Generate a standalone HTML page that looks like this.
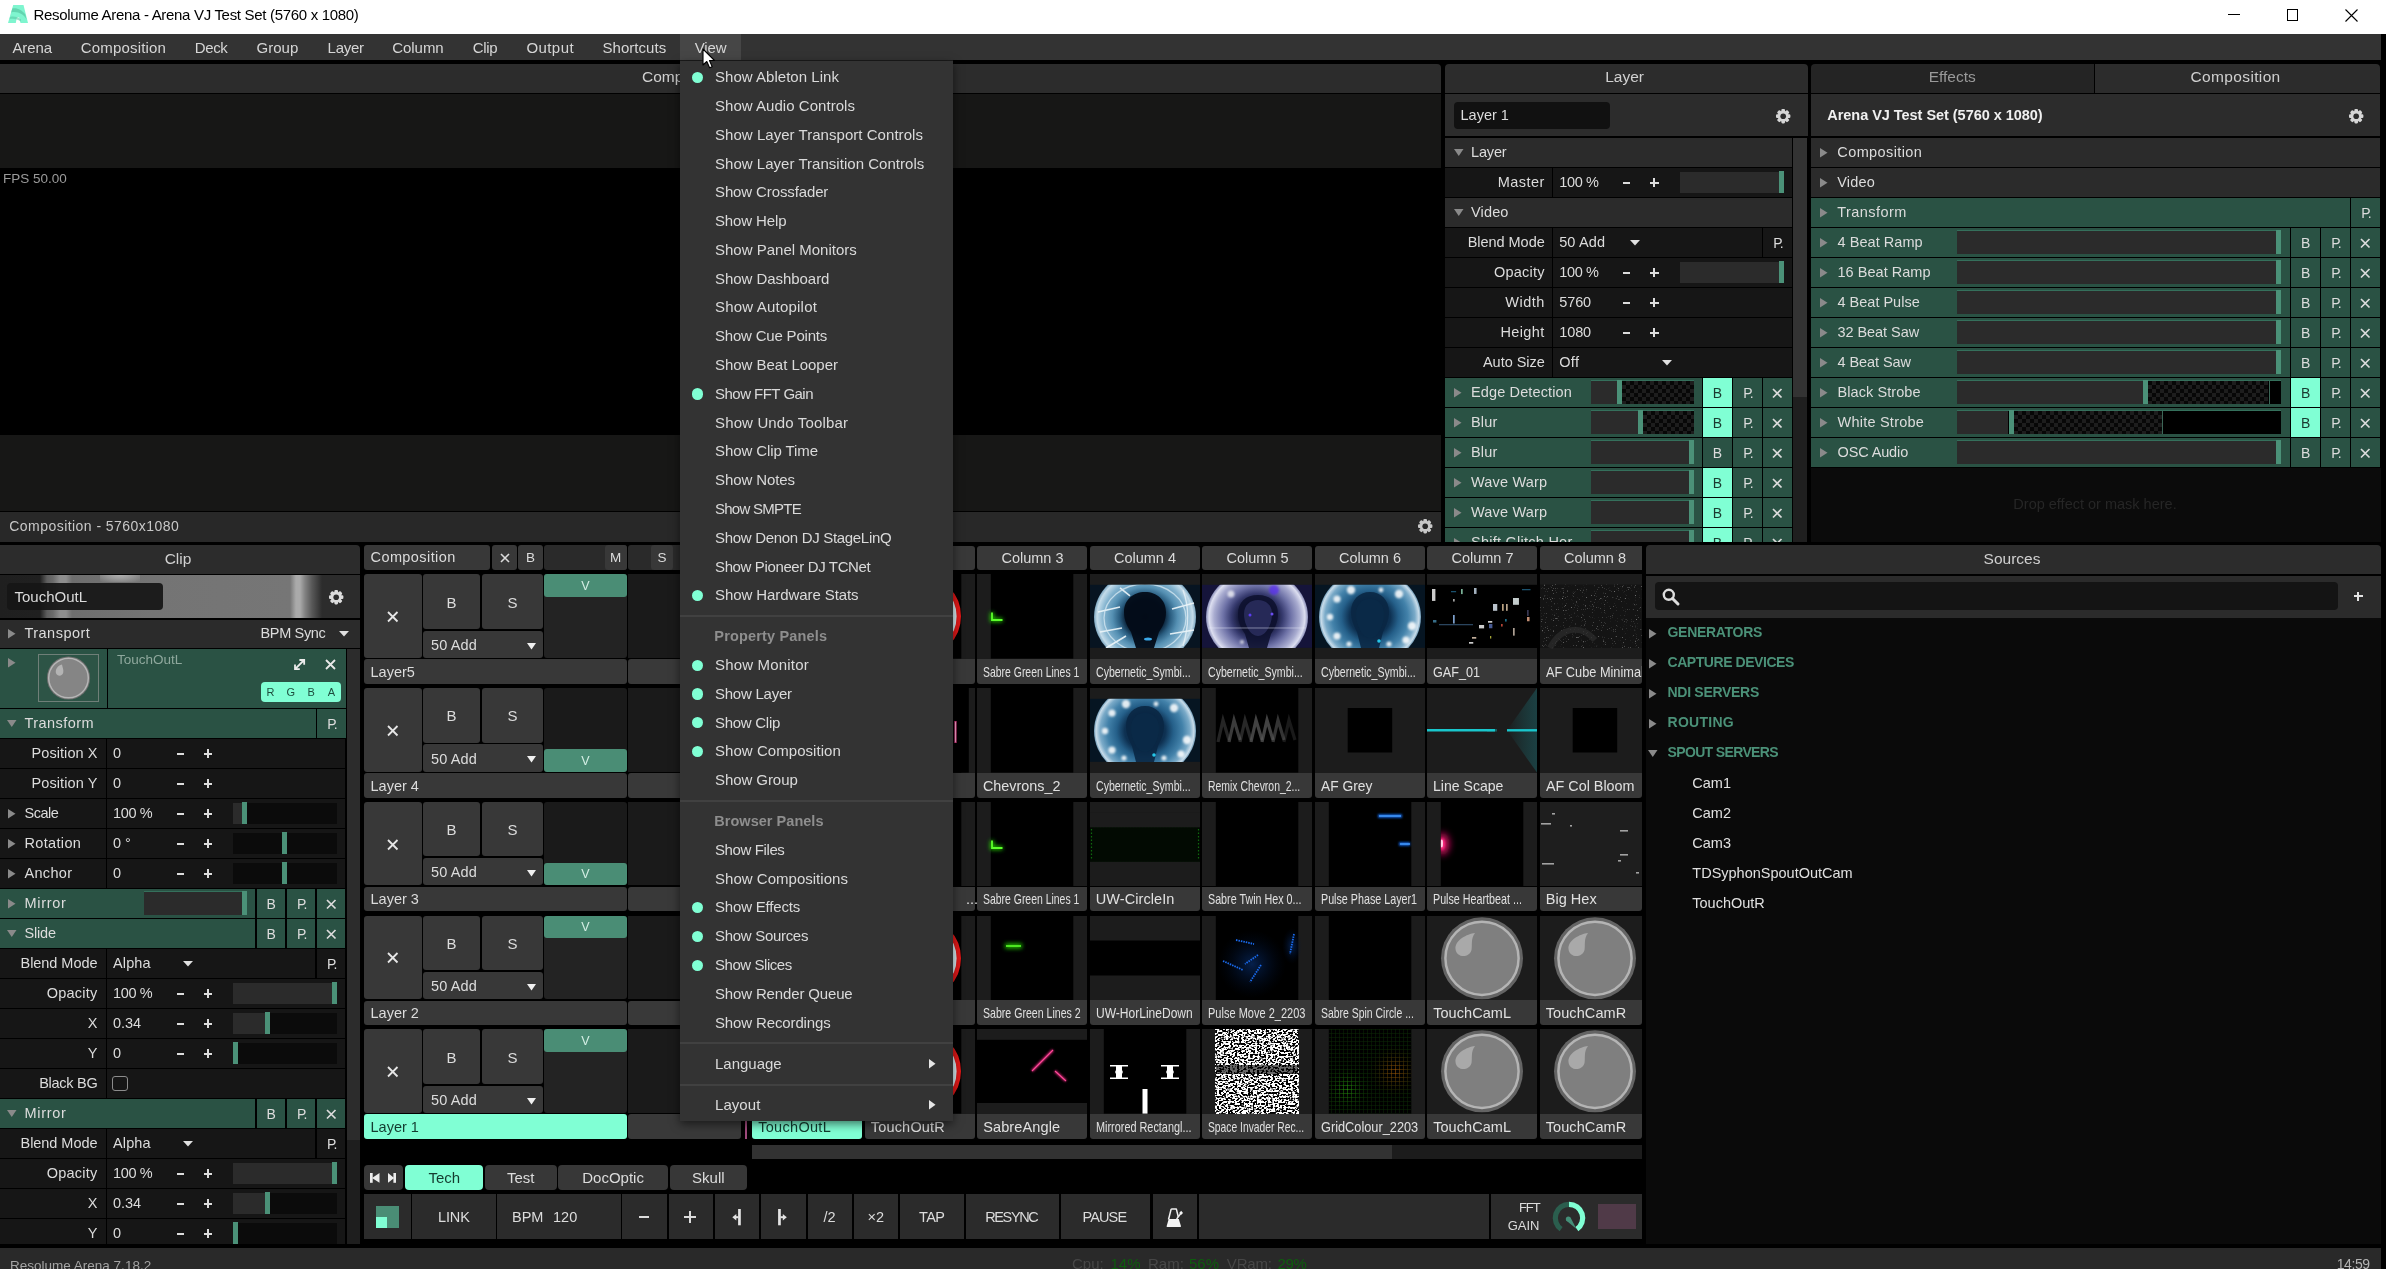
<!DOCTYPE html>
<html><head><meta charset="utf-8"><title>Resolume Arena</title>
<style>
html,body{margin:0;padding:0;background:#000;}
body{width:2386px;height:1269px;overflow:hidden;position:relative;font-family:"Liberation Sans",sans-serif;}
#root{position:absolute;left:0;top:0;width:2386px;height:1269px;overflow:hidden;background:#000;will-change:transform;}
#root div,#root svg{position:absolute;box-sizing:border-box;}
#root svg{overflow:visible;}
</style></head><body><div id="root">
<div style="left:0px;top:0px;width:2386px;height:34px;background:#ffffff;"></div>
<svg style="left:8px;top:5px;" width="20" height="19" viewBox="0 0 20 19"><path d="M5.2 0H15.5L20 18H12.5L11.2 12.5H8.8L7.8 18H0Z" fill="#7ff5cf"/><path d="M4.3 3.5C9 2.5 14 5 17.3 9.5L18.6 14.5C15.5 9 9.5 6 3.2 7.5Z" fill="#59c9a5" opacity=".75"/><path d="M2 12C6 11 10 12 13 14.5L12.6 16.5C9.5 14 5.5 13.3 1.6 14Z" fill="#59c9a5" opacity=".6"/></svg>
<div style="top:4.65px;height:19.5px;line-height:19.5px;font-size:15px;color:#000;white-space:nowrap;left:33.5px;letter-spacing:-0.31px;">Resolume Arena - Arena VJ Test Set (5760 x 1080)</div>
<div style="left:2228px;top:14px;width:12px;height:1px;background:#000;"></div>
<div style="left:2286.5px;top:9px;width:11.5px;height:11.5px;border:1px solid #000;"></div>
<svg style="left:2344.5px;top:8.5px;" width="13" height="13" viewBox="0 0 13 13"><path d="M0.5 0.5L12.5 12.5M12.5 0.5L0.5 12.5" stroke="#000" stroke-width="1.1"/></svg>
<div style="left:0px;top:34px;width:2381px;height:26px;background:#333333;"></div>
<div style="left:680px;top:34px;width:61px;height:26px;background:#464646;"></div>
<div style="top:38.25px;height:19.5px;line-height:19.5px;font-size:15px;color:#d6d6d6;white-space:nowrap;left:12.4px;letter-spacing:-0.09px;">Arena</div>
<div style="top:38.25px;height:19.5px;line-height:19.5px;font-size:15px;color:#d6d6d6;white-space:nowrap;left:80.8px;letter-spacing:0.17px;">Composition</div>
<div style="top:38.25px;height:19.5px;line-height:19.5px;font-size:15px;color:#d6d6d6;white-space:nowrap;left:194.8px;letter-spacing:-0.42px;">Deck</div>
<div style="top:38.25px;height:19.5px;line-height:19.5px;font-size:15px;color:#d6d6d6;white-space:nowrap;left:256.5px;letter-spacing:0.04px;">Group</div>
<div style="top:38.25px;height:19.5px;line-height:19.5px;font-size:15px;color:#d6d6d6;white-space:nowrap;left:327.6px;letter-spacing:-0.26px;">Layer</div>
<div style="top:38.25px;height:19.5px;line-height:19.5px;font-size:15px;color:#d6d6d6;white-space:nowrap;left:392.3px;letter-spacing:-0.06px;">Column</div>
<div style="top:38.25px;height:19.5px;line-height:19.5px;font-size:15px;color:#d6d6d6;white-space:nowrap;left:472.8px;letter-spacing:-0.36px;">Clip</div>
<div style="top:38.25px;height:19.5px;line-height:19.5px;font-size:15px;color:#d6d6d6;white-space:nowrap;left:526.4px;letter-spacing:0.43px;">Output</div>
<div style="top:38.25px;height:19.5px;line-height:19.5px;font-size:15px;color:#d6d6d6;white-space:nowrap;left:602.5px;letter-spacing:0.04px;">Shortcuts</div>
<div style="top:38.25px;height:19.5px;line-height:19.5px;font-size:15px;color:#d6d6d6;white-space:nowrap;left:694.7px;letter-spacing:-0.09px;">View</div>
<div style="left:0px;top:64px;width:1441px;height:29px;background:#2c2c2c;border-radius:0 4px 0 0;"></div>
<div style="top:67.42px;height:20.15px;line-height:20.15px;font-size:15.5px;color:#d0d0d0;white-space:nowrap;left:642px;">Composition Monitor</div>
<div style="left:0px;top:94px;width:1441px;height:74px;background:#171716;"></div>
<div style="left:0px;top:168px;width:1441px;height:267px;background:#000;"></div>
<div style="left:0px;top:435px;width:1441px;height:76px;background:#171716;"></div>
<div style="top:170.22px;height:17.55px;line-height:17.55px;font-size:13.5px;color:#9a9a9a;white-space:nowrap;left:3px;">FPS 50.00</div>
<div style="left:0px;top:512px;width:1441px;height:29.5px;background:#282828;"></div>
<div style="top:516.9px;height:18.2px;line-height:18.2px;font-size:14px;color:#c8c8c8;white-space:nowrap;left:9.3px;letter-spacing:0.45px;">Composition - 5760x1080</div>
<svg style="left:1417.3px;top:518.3px;" width="16.4" height="16.4" viewBox="0 0 16.4 16.4"><g transform="translate(8.2,8.2)"><rect x="-1.85" y="-7.2" width="3.7" height="14.4" rx="1.1" transform="rotate(0)" fill="#c8c8c8"/><rect x="-1.85" y="-7.2" width="3.7" height="14.4" rx="1.1" transform="rotate(45)" fill="#c8c8c8"/><rect x="-1.85" y="-7.2" width="3.7" height="14.4" rx="1.1" transform="rotate(90)" fill="#c8c8c8"/><rect x="-1.85" y="-7.2" width="3.7" height="14.4" rx="1.1" transform="rotate(135)" fill="#c8c8c8"/><circle r="5.4" fill="#c8c8c8"/><circle r="2.81" fill="#282828"/></g></svg>
<div style="left:0;top:0;width:2386px;height:541.5px;overflow:hidden;">
<div style="left:1444.5px;top:64.3px;width:363px;height:28.5px;background:#2c2c2c;border-radius:4px 4px 0 0;"></div>
<div style="top:67.42px;height:20.15px;line-height:20.15px;font-size:15.5px;color:#d0d0d0;white-space:nowrap;left:1424.6px;width:400px;text-align:center;">Layer</div>
<div style="left:1444.5px;top:94.4px;width:363px;height:42px;background:#2c2c2c;"></div>
<div style="left:1453.5px;top:101.5px;width:156px;height:27.5px;background:#111;border-radius:4px;"></div>
<div style="top:106.08px;height:18.85px;line-height:18.85px;font-size:14.5px;color:#dcdcdc;white-space:nowrap;left:1460.5px;">Layer 1</div>
<svg style="left:1775.1px;top:107.8px;" width="16.4" height="16.4" viewBox="0 0 16.4 16.4"><g transform="translate(8.2,8.2)"><rect x="-1.85" y="-7.2" width="3.7" height="14.4" rx="1.1" transform="rotate(0)" fill="#d6d6d6"/><rect x="-1.85" y="-7.2" width="3.7" height="14.4" rx="1.1" transform="rotate(45)" fill="#d6d6d6"/><rect x="-1.85" y="-7.2" width="3.7" height="14.4" rx="1.1" transform="rotate(90)" fill="#d6d6d6"/><rect x="-1.85" y="-7.2" width="3.7" height="14.4" rx="1.1" transform="rotate(135)" fill="#d6d6d6"/><circle r="5.4" fill="#d6d6d6"/><circle r="2.81" fill="#2c2c2c"/></g></svg>
<div style="left:1793.2px;top:138px;width:14.3px;height:404px;background:#1f1f1f;"></div>
<div style="left:1793.2px;top:138px;width:14.3px;height:259px;background:#333;"></div>
<div style="left:1444.5px;top:138px;width:347.1px;height:28.5px;background:#2b2b2b;"></div>
<svg style="left:1453.75px;top:149.25px;" width="9.5" height="7" viewBox="0 0 9.5 7"><path d="M0 0L9.5 0L4.75 7Z" fill="#8a8a8a"/></svg>
<div style="top:142.82px;height:18.85px;line-height:18.85px;font-size:14.5px;color:#dcdcdc;white-space:nowrap;left:1471px;letter-spacing:-0.15px;">Layer</div>
<div style="left:1444.5px;top:168px;width:107.2px;height:28.5px;background:#161616;"></div>
<div style="left:1553.2px;top:168px;width:238.4px;height:28.5px;background:#161616;"></div>
<div style="top:172.82px;height:18.85px;line-height:18.85px;font-size:14.5px;color:#dcdcdc;white-space:nowrap;right:841.3px;text-align:right;letter-spacing:0.43px;">Master</div>
<div style="top:172.82px;height:18.85px;line-height:18.85px;font-size:14.5px;color:#dcdcdc;white-space:nowrap;left:1559.2px;letter-spacing:-0.34px;">100 %</div>
<div style="left:1623px;top:181.85px;width:7.4px;height:1.8px;background:#dcdcdc;"></div>
<div style="left:1649.8px;top:181.85px;width:8.8px;height:1.8px;background:#dcdcdc;"></div>
<div style="left:1653.3px;top:178.35px;width:1.8px;height:8.8px;background:#dcdcdc;"></div>
<div style="left:1679.5px;top:171.5px;width:104.5px;height:21px;background:#0b0b0b;"></div>
<div style="left:1679.5px;top:171.5px;width:99.5px;height:21px;background:#2b2b2b;"></div>
<div style="left:1779px;top:171px;width:5px;height:22px;background:#4b9178;"></div>
<div style="left:1444.5px;top:198px;width:347.1px;height:28.5px;background:#2b2b2b;"></div>
<svg style="left:1453.75px;top:209.25px;" width="9.5" height="7" viewBox="0 0 9.5 7"><path d="M0 0L9.5 0L4.75 7Z" fill="#8a8a8a"/></svg>
<div style="top:202.82px;height:18.85px;line-height:18.85px;font-size:14.5px;color:#dcdcdc;white-space:nowrap;left:1471px;letter-spacing:0.15px;">Video</div>
<div style="left:1444.5px;top:228px;width:107.2px;height:28.5px;background:#161616;"></div>
<div style="left:1553.2px;top:228px;width:208.4px;height:28.5px;background:#161616;"></div>
<div style="top:232.82px;height:18.85px;line-height:18.85px;font-size:14.5px;color:#dcdcdc;white-space:nowrap;right:841.3px;text-align:right;letter-spacing:-0.04px;">Blend Mode</div>
<div style="top:232.82px;height:18.85px;line-height:18.85px;font-size:14.5px;color:#dcdcdc;white-space:nowrap;left:1559.2px;letter-spacing:0.12px;">50 Add</div>
<svg style="left:1629.5px;top:240px;" width="10" height="5.5" viewBox="0 0 10 5.5"><path d="M0 0L10 0L5 5.5Z" fill="#e0e0e0"/></svg>
<div style="left:1763.1px;top:228px;width:28.5px;height:28.5px;background:#161616;"></div>
<div style="top:233.65px;height:18.2px;line-height:18.2px;font-size:14px;color:#dcdcdc;white-space:nowrap;left:1763.6px;width:28.5px;text-align:center;letter-spacing:-1px;">P.</div>
<div style="left:1444.5px;top:258px;width:107.2px;height:28.5px;background:#161616;"></div>
<div style="left:1553.2px;top:258px;width:238.4px;height:28.5px;background:#161616;"></div>
<div style="top:262.82px;height:18.85px;line-height:18.85px;font-size:14.5px;color:#dcdcdc;white-space:nowrap;right:841.3px;text-align:right;letter-spacing:0.23px;">Opacity</div>
<div style="top:262.82px;height:18.85px;line-height:18.85px;font-size:14.5px;color:#dcdcdc;white-space:nowrap;left:1559.2px;letter-spacing:-0.34px;">100 %</div>
<div style="left:1623px;top:271.85px;width:7.4px;height:1.8px;background:#dcdcdc;"></div>
<div style="left:1649.8px;top:271.85px;width:8.8px;height:1.8px;background:#dcdcdc;"></div>
<div style="left:1653.3px;top:268.35px;width:1.8px;height:8.8px;background:#dcdcdc;"></div>
<div style="left:1679.5px;top:261.5px;width:104.5px;height:21px;background:#0b0b0b;"></div>
<div style="left:1679.5px;top:261.5px;width:99.5px;height:21px;background:#2b2b2b;"></div>
<div style="left:1779px;top:261px;width:5px;height:22px;background:#4b9178;"></div>
<div style="left:1444.5px;top:288px;width:107.2px;height:28.5px;background:#161616;"></div>
<div style="left:1553.2px;top:288px;width:238.4px;height:28.5px;background:#161616;"></div>
<div style="top:292.82px;height:18.85px;line-height:18.85px;font-size:14.5px;color:#dcdcdc;white-space:nowrap;right:841.3px;text-align:right;letter-spacing:0.47px;">Width</div>
<div style="top:292.82px;height:18.85px;line-height:18.85px;font-size:14.5px;color:#dcdcdc;white-space:nowrap;left:1559.2px;letter-spacing:-0.09px;">5760</div>
<div style="left:1623px;top:301.85px;width:7.4px;height:1.8px;background:#dcdcdc;"></div>
<div style="left:1649.8px;top:301.85px;width:8.8px;height:1.8px;background:#dcdcdc;"></div>
<div style="left:1653.3px;top:298.35px;width:1.8px;height:8.8px;background:#dcdcdc;"></div>
<div style="left:1444.5px;top:318px;width:107.2px;height:28.5px;background:#161616;"></div>
<div style="left:1553.2px;top:318px;width:238.4px;height:28.5px;background:#161616;"></div>
<div style="top:322.82px;height:18.85px;line-height:18.85px;font-size:14.5px;color:#dcdcdc;white-space:nowrap;right:841.3px;text-align:right;letter-spacing:0.4px;">Height</div>
<div style="top:322.82px;height:18.85px;line-height:18.85px;font-size:14.5px;color:#dcdcdc;white-space:nowrap;left:1559.2px;letter-spacing:-0.09px;">1080</div>
<div style="left:1623px;top:331.85px;width:7.4px;height:1.8px;background:#dcdcdc;"></div>
<div style="left:1649.8px;top:331.85px;width:8.8px;height:1.8px;background:#dcdcdc;"></div>
<div style="left:1653.3px;top:328.35px;width:1.8px;height:8.8px;background:#dcdcdc;"></div>
<div style="left:1444.5px;top:348px;width:107.2px;height:28.5px;background:#161616;"></div>
<div style="left:1553.2px;top:348px;width:238.4px;height:28.5px;background:#161616;"></div>
<div style="top:352.82px;height:18.85px;line-height:18.85px;font-size:14.5px;color:#dcdcdc;white-space:nowrap;right:841.3px;text-align:right;letter-spacing:-0.04px;">Auto Size</div>
<div style="top:352.82px;height:18.85px;line-height:18.85px;font-size:14.5px;color:#dcdcdc;white-space:nowrap;left:1559.2px;letter-spacing:0.38px;">Off</div>
<svg style="left:1661.5px;top:360px;" width="10" height="5.5" viewBox="0 0 10 5.5"><path d="M0 0L10 0L5 5.5Z" fill="#e0e0e0"/></svg>
<div style="left:1444.5px;top:378px;width:257.1px;height:28.5px;background:#2a5244;"></div>
<svg style="left:1453.75px;top:387.5px;" width="7.5" height="9.5" viewBox="0 0 7.5 9.5"><path d="M0 0L7.5 4.75L0 9.5Z" fill="#8a8a8a"/></svg>
<div style="top:382.82px;height:18.85px;line-height:18.85px;font-size:14.5px;color:#dcdcdc;white-space:nowrap;left:1471px;letter-spacing:0.13px;">Edge Detection</div>
<div style="left:1591px;top:380px;width:102.6px;height:24px;background:#35705c;"></div>
<div style="left:1591px;top:380.5px;width:102.6px;height:23px;background:#000;"></div>
<div style="left:1591px;top:380.5px;width:26px;height:23px;background:#2b2b2b;"></div>
<div style="left:1622px;top:380.5px;width:71.6px;height:23px;background-color:#070707;background-image:linear-gradient(45deg,#1d1d1d 25%,transparent 25%,transparent 75%,#1d1d1d 75%),linear-gradient(45deg,#1d1d1d 25%,transparent 25%,transparent 75%,#1d1d1d 75%);background-size:8px 8px;background-position:0 0,4px 4px;"></div>
<div style="left:1617px;top:380px;width:5px;height:24px;background:#4b9178;"></div>
<div style="left:1703.1px;top:378px;width:28.5px;height:28.5px;background:#80ffd4;"></div>
<div style="top:383.65px;height:18.2px;line-height:18.2px;font-size:14px;color:#1a3a30;white-space:nowrap;left:1703.1px;width:28.5px;text-align:center;">B</div>
<div style="left:1733.1px;top:378px;width:28.5px;height:28.5px;background:#2a5244;"></div>
<div style="top:383.65px;height:18.2px;line-height:18.2px;font-size:14px;color:#dcdcdc;white-space:nowrap;left:1733.6px;width:28.5px;text-align:center;letter-spacing:-1px;">P.</div>
<div style="left:1763.1px;top:378px;width:28.5px;height:28.5px;background:#2a5244;"></div>
<svg style="left:1772.1px;top:387.5px;" width="10.5" height="10.5" viewBox="0 0 10.5 10.5"><path d="M1 1L9.5 9.5M9.5 1L1 9.5" stroke="#dcdcdc" stroke-width="1.7" fill="none"/></svg>
<div style="left:1444.5px;top:408px;width:257.1px;height:28.5px;background:#2a5244;"></div>
<svg style="left:1453.75px;top:417.5px;" width="7.5" height="9.5" viewBox="0 0 7.5 9.5"><path d="M0 0L7.5 4.75L0 9.5Z" fill="#8a8a8a"/></svg>
<div style="top:412.82px;height:18.85px;line-height:18.85px;font-size:14.5px;color:#dcdcdc;white-space:nowrap;left:1471px;letter-spacing:0.2px;">Blur</div>
<div style="left:1591px;top:410px;width:102.6px;height:24px;background:#35705c;"></div>
<div style="left:1591px;top:410.5px;width:102.6px;height:23px;background:#000;"></div>
<div style="left:1591px;top:410.5px;width:47.3px;height:23px;background:#2b2b2b;"></div>
<div style="left:1643.3px;top:410.5px;width:50.3px;height:23px;background-color:#070707;background-image:linear-gradient(45deg,#1d1d1d 25%,transparent 25%,transparent 75%,#1d1d1d 75%),linear-gradient(45deg,#1d1d1d 25%,transparent 25%,transparent 75%,#1d1d1d 75%);background-size:8px 8px;background-position:0 0,4px 4px;"></div>
<div style="left:1638.3px;top:410px;width:5px;height:24px;background:#4b9178;"></div>
<div style="left:1703.1px;top:408px;width:28.5px;height:28.5px;background:#80ffd4;"></div>
<div style="top:413.65px;height:18.2px;line-height:18.2px;font-size:14px;color:#1a3a30;white-space:nowrap;left:1703.1px;width:28.5px;text-align:center;">B</div>
<div style="left:1733.1px;top:408px;width:28.5px;height:28.5px;background:#2a5244;"></div>
<div style="top:413.65px;height:18.2px;line-height:18.2px;font-size:14px;color:#dcdcdc;white-space:nowrap;left:1733.6px;width:28.5px;text-align:center;letter-spacing:-1px;">P.</div>
<div style="left:1763.1px;top:408px;width:28.5px;height:28.5px;background:#2a5244;"></div>
<svg style="left:1772.1px;top:417.5px;" width="10.5" height="10.5" viewBox="0 0 10.5 10.5"><path d="M1 1L9.5 9.5M9.5 1L1 9.5" stroke="#dcdcdc" stroke-width="1.7" fill="none"/></svg>
<div style="left:1444.5px;top:438px;width:257.1px;height:28.5px;background:#2a5244;"></div>
<svg style="left:1453.75px;top:447.5px;" width="7.5" height="9.5" viewBox="0 0 7.5 9.5"><path d="M0 0L7.5 4.75L0 9.5Z" fill="#8a8a8a"/></svg>
<div style="top:442.82px;height:18.85px;line-height:18.85px;font-size:14.5px;color:#dcdcdc;white-space:nowrap;left:1471px;letter-spacing:0.2px;">Blur</div>
<div style="left:1591px;top:440px;width:102.6px;height:24px;background:#35705c;"></div>
<div style="left:1591px;top:440.5px;width:102.6px;height:23px;background:#000;"></div>
<div style="left:1591px;top:440.5px;width:97.6px;height:23px;background:#2b2b2b;"></div>
<div style="left:1688.6px;top:440px;width:5px;height:24px;background:#4b9178;"></div>
<div style="left:1703.1px;top:438px;width:28.5px;height:28.5px;background:#2a5244;"></div>
<div style="top:443.65px;height:18.2px;line-height:18.2px;font-size:14px;color:#dcdcdc;white-space:nowrap;left:1703.1px;width:28.5px;text-align:center;">B</div>
<div style="left:1733.1px;top:438px;width:28.5px;height:28.5px;background:#2a5244;"></div>
<div style="top:443.65px;height:18.2px;line-height:18.2px;font-size:14px;color:#dcdcdc;white-space:nowrap;left:1733.6px;width:28.5px;text-align:center;letter-spacing:-1px;">P.</div>
<div style="left:1763.1px;top:438px;width:28.5px;height:28.5px;background:#2a5244;"></div>
<svg style="left:1772.1px;top:447.5px;" width="10.5" height="10.5" viewBox="0 0 10.5 10.5"><path d="M1 1L9.5 9.5M9.5 1L1 9.5" stroke="#dcdcdc" stroke-width="1.7" fill="none"/></svg>
<div style="left:1444.5px;top:468px;width:257.1px;height:28.5px;background:#2a5244;"></div>
<svg style="left:1453.75px;top:477.5px;" width="7.5" height="9.5" viewBox="0 0 7.5 9.5"><path d="M0 0L7.5 4.75L0 9.5Z" fill="#8a8a8a"/></svg>
<div style="top:472.82px;height:18.85px;line-height:18.85px;font-size:14.5px;color:#dcdcdc;white-space:nowrap;left:1471px;letter-spacing:0.17px;">Wave Warp</div>
<div style="left:1591px;top:470px;width:102.6px;height:24px;background:#35705c;"></div>
<div style="left:1591px;top:470.5px;width:102.6px;height:23px;background:#000;"></div>
<div style="left:1591px;top:470.5px;width:97.6px;height:23px;background:#2b2b2b;"></div>
<div style="left:1688.6px;top:470px;width:5px;height:24px;background:#4b9178;"></div>
<div style="left:1703.1px;top:468px;width:28.5px;height:28.5px;background:#80ffd4;"></div>
<div style="top:473.65px;height:18.2px;line-height:18.2px;font-size:14px;color:#1a3a30;white-space:nowrap;left:1703.1px;width:28.5px;text-align:center;">B</div>
<div style="left:1733.1px;top:468px;width:28.5px;height:28.5px;background:#2a5244;"></div>
<div style="top:473.65px;height:18.2px;line-height:18.2px;font-size:14px;color:#dcdcdc;white-space:nowrap;left:1733.6px;width:28.5px;text-align:center;letter-spacing:-1px;">P.</div>
<div style="left:1763.1px;top:468px;width:28.5px;height:28.5px;background:#2a5244;"></div>
<svg style="left:1772.1px;top:477.5px;" width="10.5" height="10.5" viewBox="0 0 10.5 10.5"><path d="M1 1L9.5 9.5M9.5 1L1 9.5" stroke="#dcdcdc" stroke-width="1.7" fill="none"/></svg>
<div style="left:1444.5px;top:498px;width:257.1px;height:28.5px;background:#2a5244;"></div>
<svg style="left:1453.75px;top:507.5px;" width="7.5" height="9.5" viewBox="0 0 7.5 9.5"><path d="M0 0L7.5 4.75L0 9.5Z" fill="#8a8a8a"/></svg>
<div style="top:502.82px;height:18.85px;line-height:18.85px;font-size:14.5px;color:#dcdcdc;white-space:nowrap;left:1471px;letter-spacing:0.17px;">Wave Warp</div>
<div style="left:1591px;top:500px;width:102.6px;height:24px;background:#35705c;"></div>
<div style="left:1591px;top:500.5px;width:102.6px;height:23px;background:#000;"></div>
<div style="left:1591px;top:500.5px;width:97.6px;height:23px;background:#2b2b2b;"></div>
<div style="left:1688.6px;top:500px;width:5px;height:24px;background:#4b9178;"></div>
<div style="left:1703.1px;top:498px;width:28.5px;height:28.5px;background:#80ffd4;"></div>
<div style="top:503.65px;height:18.2px;line-height:18.2px;font-size:14px;color:#1a3a30;white-space:nowrap;left:1703.1px;width:28.5px;text-align:center;">B</div>
<div style="left:1733.1px;top:498px;width:28.5px;height:28.5px;background:#2a5244;"></div>
<div style="top:503.65px;height:18.2px;line-height:18.2px;font-size:14px;color:#dcdcdc;white-space:nowrap;left:1733.6px;width:28.5px;text-align:center;letter-spacing:-1px;">P.</div>
<div style="left:1763.1px;top:498px;width:28.5px;height:28.5px;background:#2a5244;"></div>
<svg style="left:1772.1px;top:507.5px;" width="10.5" height="10.5" viewBox="0 0 10.5 10.5"><path d="M1 1L9.5 9.5M9.5 1L1 9.5" stroke="#dcdcdc" stroke-width="1.7" fill="none"/></svg>
<div style="left:1444.5px;top:528px;width:257.1px;height:28.5px;background:#2a5244;"></div>
<svg style="left:1453.75px;top:537.5px;" width="7.5" height="9.5" viewBox="0 0 7.5 9.5"><path d="M0 0L7.5 4.75L0 9.5Z" fill="#8a8a8a"/></svg>
<div style="top:532.83px;height:18.85px;line-height:18.85px;font-size:14.5px;color:#dcdcdc;white-space:nowrap;left:1471px;letter-spacing:0.25px;">Shift Glitch Hor</div>
<div style="left:1591px;top:530px;width:102.6px;height:24px;background:#35705c;"></div>
<div style="left:1591px;top:530.5px;width:102.6px;height:23px;background:#000;"></div>
<div style="left:1591px;top:530.5px;width:97.6px;height:23px;background:#2b2b2b;"></div>
<div style="left:1688.6px;top:530px;width:5px;height:24px;background:#4b9178;"></div>
<div style="left:1703.1px;top:528px;width:28.5px;height:28.5px;background:#80ffd4;"></div>
<div style="top:533.65px;height:18.2px;line-height:18.2px;font-size:14px;color:#1a3a30;white-space:nowrap;left:1703.1px;width:28.5px;text-align:center;">B</div>
<div style="left:1733.1px;top:528px;width:28.5px;height:28.5px;background:#2a5244;"></div>
<div style="top:533.65px;height:18.2px;line-height:18.2px;font-size:14px;color:#dcdcdc;white-space:nowrap;left:1733.6px;width:28.5px;text-align:center;letter-spacing:-1px;">P.</div>
<div style="left:1763.1px;top:528px;width:28.5px;height:28.5px;background:#2a5244;"></div>
<svg style="left:1772.1px;top:537.5px;" width="10.5" height="10.5" viewBox="0 0 10.5 10.5"><path d="M1 1L9.5 9.5M9.5 1L1 9.5" stroke="#dcdcdc" stroke-width="1.7" fill="none"/></svg>
</div>
<div style="left:1811px;top:64.3px;width:282.5px;height:28.5px;background:#242424;border-radius:4px 0 0 0;"></div>
<div style="top:67.42px;height:20.15px;line-height:20.15px;font-size:15.5px;color:#9a9a9a;white-space:nowrap;left:1752.25px;width:400px;text-align:center;">Effects</div>
<div style="left:2095px;top:64.3px;width:285px;height:28.5px;background:#2c2c2c;border-radius:0 4px 0 0;"></div>
<div style="top:67.42px;height:20.15px;line-height:20.15px;font-size:15.5px;color:#d0d0d0;white-space:nowrap;left:2035.6px;width:400px;text-align:center;letter-spacing:0.35px;">Composition</div>
<div style="left:1811px;top:94.4px;width:569px;height:42px;background:#2c2c2c;"></div>
<div style="top:105.58px;height:18.85px;line-height:18.85px;font-size:14.5px;color:#f0f0f0;white-space:nowrap;font-weight:bold;left:1827.3px;letter-spacing:-0.04px;">Arena VJ Test Set (5760 x 1080)</div>
<svg style="left:2347.6px;top:107.8px;" width="16.4" height="16.4" viewBox="0 0 16.4 16.4"><g transform="translate(8.2,8.2)"><rect x="-1.85" y="-7.2" width="3.7" height="14.4" rx="1.1" transform="rotate(0)" fill="#d6d6d6"/><rect x="-1.85" y="-7.2" width="3.7" height="14.4" rx="1.1" transform="rotate(45)" fill="#d6d6d6"/><rect x="-1.85" y="-7.2" width="3.7" height="14.4" rx="1.1" transform="rotate(90)" fill="#d6d6d6"/><rect x="-1.85" y="-7.2" width="3.7" height="14.4" rx="1.1" transform="rotate(135)" fill="#d6d6d6"/><circle r="5.4" fill="#d6d6d6"/><circle r="2.81" fill="#2c2c2c"/></g></svg>
<div style="left:1811px;top:468px;width:569.5px;height:73.5px;background:#0b0b0b;"></div>
<div style="left:1811px;top:138px;width:568.8px;height:28.5px;background:#2b2b2b;"></div>
<svg style="left:1820.45px;top:147.5px;" width="7.5" height="9.5" viewBox="0 0 7.5 9.5"><path d="M0 0L7.5 4.75L0 9.5Z" fill="#8a8a8a"/></svg>
<div style="top:142.82px;height:18.85px;line-height:18.85px;font-size:14.5px;color:#dcdcdc;white-space:nowrap;left:1837.3px;letter-spacing:0.4px;">Composition</div>
<div style="left:1811px;top:168px;width:568.8px;height:28.5px;background:#2b2b2b;"></div>
<svg style="left:1820.45px;top:177.5px;" width="7.5" height="9.5" viewBox="0 0 7.5 9.5"><path d="M0 0L7.5 4.75L0 9.5Z" fill="#8a8a8a"/></svg>
<div style="top:172.82px;height:18.85px;line-height:18.85px;font-size:14.5px;color:#dcdcdc;white-space:nowrap;left:1837.3px;letter-spacing:0.15px;">Video</div>
<div style="left:1811px;top:198px;width:538.8px;height:28.5px;background:#2a5244;"></div>
<svg style="left:1820.45px;top:207.5px;" width="7.5" height="9.5" viewBox="0 0 7.5 9.5"><path d="M0 0L7.5 4.75L0 9.5Z" fill="#8a8a8a"/></svg>
<div style="top:202.82px;height:18.85px;line-height:18.85px;font-size:14.5px;color:#dcdcdc;white-space:nowrap;left:1837.3px;letter-spacing:0.44px;">Transform</div>
<div style="left:2351.3px;top:198px;width:28.5px;height:28.5px;background:#2a5244;"></div>
<div style="top:203.65px;height:18.2px;line-height:18.2px;font-size:14px;color:#dcdcdc;white-space:nowrap;left:2351.8px;width:28.5px;text-align:center;letter-spacing:-1px;">P.</div>
<div style="left:1811px;top:228px;width:478.8px;height:28.5px;background:#2a5244;"></div>
<svg style="left:1820.25px;top:237.5px;" width="7.5" height="9.5" viewBox="0 0 7.5 9.5"><path d="M0 0L7.5 4.75L0 9.5Z" fill="#8a8a8a"/></svg>
<div style="top:232.82px;height:18.85px;line-height:18.85px;font-size:14.5px;color:#dcdcdc;white-space:nowrap;left:1837.5px;letter-spacing:0.05px;">4 Beat Ramp</div>
<div style="left:1957.3px;top:230px;width:323.7px;height:24px;background:#35705c;"></div>
<div style="left:1957.3px;top:230.5px;width:323.7px;height:23px;background:#000;"></div>
<div style="left:1957.3px;top:230.5px;width:318.7px;height:23px;background:#2b2b2b;"></div>
<div style="left:2276px;top:230px;width:5px;height:24px;background:#4b9178;"></div>
<div style="left:2291.3px;top:228px;width:28.5px;height:28.5px;background:#2a5244;"></div>
<div style="top:233.65px;height:18.2px;line-height:18.2px;font-size:14px;color:#dcdcdc;white-space:nowrap;left:2291.3px;width:28.5px;text-align:center;">B</div>
<div style="left:2321.3px;top:228px;width:28.5px;height:28.5px;background:#2a5244;"></div>
<div style="top:233.65px;height:18.2px;line-height:18.2px;font-size:14px;color:#dcdcdc;white-space:nowrap;left:2321.8px;width:28.5px;text-align:center;letter-spacing:-1px;">P.</div>
<div style="left:2351.3px;top:228px;width:28.5px;height:28.5px;background:#2a5244;"></div>
<svg style="left:2360.3px;top:237.5px;" width="10.5" height="10.5" viewBox="0 0 10.5 10.5"><path d="M1 1L9.5 9.5M9.5 1L1 9.5" stroke="#dcdcdc" stroke-width="1.7" fill="none"/></svg>
<div style="left:1811px;top:258px;width:478.8px;height:28.5px;background:#2a5244;"></div>
<svg style="left:1820.25px;top:267.5px;" width="7.5" height="9.5" viewBox="0 0 7.5 9.5"><path d="M0 0L7.5 4.75L0 9.5Z" fill="#8a8a8a"/></svg>
<div style="top:262.82px;height:18.85px;line-height:18.85px;font-size:14.5px;color:#dcdcdc;white-space:nowrap;left:1837.5px;letter-spacing:0.03px;">16 Beat Ramp</div>
<div style="left:1957.3px;top:260px;width:323.7px;height:24px;background:#35705c;"></div>
<div style="left:1957.3px;top:260.5px;width:323.7px;height:23px;background:#000;"></div>
<div style="left:1957.3px;top:260.5px;width:318.7px;height:23px;background:#2b2b2b;"></div>
<div style="left:2276px;top:260px;width:5px;height:24px;background:#4b9178;"></div>
<div style="left:2291.3px;top:258px;width:28.5px;height:28.5px;background:#2a5244;"></div>
<div style="top:263.65px;height:18.2px;line-height:18.2px;font-size:14px;color:#dcdcdc;white-space:nowrap;left:2291.3px;width:28.5px;text-align:center;">B</div>
<div style="left:2321.3px;top:258px;width:28.5px;height:28.5px;background:#2a5244;"></div>
<div style="top:263.65px;height:18.2px;line-height:18.2px;font-size:14px;color:#dcdcdc;white-space:nowrap;left:2321.8px;width:28.5px;text-align:center;letter-spacing:-1px;">P.</div>
<div style="left:2351.3px;top:258px;width:28.5px;height:28.5px;background:#2a5244;"></div>
<svg style="left:2360.3px;top:267.5px;" width="10.5" height="10.5" viewBox="0 0 10.5 10.5"><path d="M1 1L9.5 9.5M9.5 1L1 9.5" stroke="#dcdcdc" stroke-width="1.7" fill="none"/></svg>
<div style="left:1811px;top:288px;width:478.8px;height:28.5px;background:#2a5244;"></div>
<svg style="left:1820.25px;top:297.5px;" width="7.5" height="9.5" viewBox="0 0 7.5 9.5"><path d="M0 0L7.5 4.75L0 9.5Z" fill="#8a8a8a"/></svg>
<div style="top:292.82px;height:18.85px;line-height:18.85px;font-size:14.5px;color:#dcdcdc;white-space:nowrap;left:1837.5px;letter-spacing:-0px;">4 Beat Pulse</div>
<div style="left:1957.3px;top:290px;width:323.7px;height:24px;background:#35705c;"></div>
<div style="left:1957.3px;top:290.5px;width:323.7px;height:23px;background:#000;"></div>
<div style="left:1957.3px;top:290.5px;width:318.7px;height:23px;background:#2b2b2b;"></div>
<div style="left:2276px;top:290px;width:5px;height:24px;background:#4b9178;"></div>
<div style="left:2291.3px;top:288px;width:28.5px;height:28.5px;background:#2a5244;"></div>
<div style="top:293.65px;height:18.2px;line-height:18.2px;font-size:14px;color:#dcdcdc;white-space:nowrap;left:2291.3px;width:28.5px;text-align:center;">B</div>
<div style="left:2321.3px;top:288px;width:28.5px;height:28.5px;background:#2a5244;"></div>
<div style="top:293.65px;height:18.2px;line-height:18.2px;font-size:14px;color:#dcdcdc;white-space:nowrap;left:2321.8px;width:28.5px;text-align:center;letter-spacing:-1px;">P.</div>
<div style="left:2351.3px;top:288px;width:28.5px;height:28.5px;background:#2a5244;"></div>
<svg style="left:2360.3px;top:297.5px;" width="10.5" height="10.5" viewBox="0 0 10.5 10.5"><path d="M1 1L9.5 9.5M9.5 1L1 9.5" stroke="#dcdcdc" stroke-width="1.7" fill="none"/></svg>
<div style="left:1811px;top:318px;width:478.8px;height:28.5px;background:#2a5244;"></div>
<svg style="left:1820.25px;top:327.5px;" width="7.5" height="9.5" viewBox="0 0 7.5 9.5"><path d="M0 0L7.5 4.75L0 9.5Z" fill="#8a8a8a"/></svg>
<div style="top:322.82px;height:18.85px;line-height:18.85px;font-size:14.5px;color:#dcdcdc;white-space:nowrap;left:1837.5px;letter-spacing:-0.06px;">32 Beat Saw</div>
<div style="left:1957.3px;top:320px;width:323.7px;height:24px;background:#35705c;"></div>
<div style="left:1957.3px;top:320.5px;width:323.7px;height:23px;background:#000;"></div>
<div style="left:1957.3px;top:320.5px;width:318.7px;height:23px;background:#2b2b2b;"></div>
<div style="left:2276px;top:320px;width:5px;height:24px;background:#4b9178;"></div>
<div style="left:2291.3px;top:318px;width:28.5px;height:28.5px;background:#2a5244;"></div>
<div style="top:323.65px;height:18.2px;line-height:18.2px;font-size:14px;color:#dcdcdc;white-space:nowrap;left:2291.3px;width:28.5px;text-align:center;">B</div>
<div style="left:2321.3px;top:318px;width:28.5px;height:28.5px;background:#2a5244;"></div>
<div style="top:323.65px;height:18.2px;line-height:18.2px;font-size:14px;color:#dcdcdc;white-space:nowrap;left:2321.8px;width:28.5px;text-align:center;letter-spacing:-1px;">P.</div>
<div style="left:2351.3px;top:318px;width:28.5px;height:28.5px;background:#2a5244;"></div>
<svg style="left:2360.3px;top:327.5px;" width="10.5" height="10.5" viewBox="0 0 10.5 10.5"><path d="M1 1L9.5 9.5M9.5 1L1 9.5" stroke="#dcdcdc" stroke-width="1.7" fill="none"/></svg>
<div style="left:1811px;top:348px;width:478.8px;height:28.5px;background:#2a5244;"></div>
<svg style="left:1820.25px;top:357.5px;" width="7.5" height="9.5" viewBox="0 0 7.5 9.5"><path d="M0 0L7.5 4.75L0 9.5Z" fill="#8a8a8a"/></svg>
<div style="top:352.82px;height:18.85px;line-height:18.85px;font-size:14.5px;color:#dcdcdc;white-space:nowrap;left:1837.5px;letter-spacing:-0.07px;">4 Beat Saw</div>
<div style="left:1957.3px;top:350px;width:323.7px;height:24px;background:#35705c;"></div>
<div style="left:1957.3px;top:350.5px;width:323.7px;height:23px;background:#000;"></div>
<div style="left:1957.3px;top:350.5px;width:318.7px;height:23px;background:#2b2b2b;"></div>
<div style="left:2276px;top:350px;width:5px;height:24px;background:#4b9178;"></div>
<div style="left:2291.3px;top:348px;width:28.5px;height:28.5px;background:#2a5244;"></div>
<div style="top:353.65px;height:18.2px;line-height:18.2px;font-size:14px;color:#dcdcdc;white-space:nowrap;left:2291.3px;width:28.5px;text-align:center;">B</div>
<div style="left:2321.3px;top:348px;width:28.5px;height:28.5px;background:#2a5244;"></div>
<div style="top:353.65px;height:18.2px;line-height:18.2px;font-size:14px;color:#dcdcdc;white-space:nowrap;left:2321.8px;width:28.5px;text-align:center;letter-spacing:-1px;">P.</div>
<div style="left:2351.3px;top:348px;width:28.5px;height:28.5px;background:#2a5244;"></div>
<svg style="left:2360.3px;top:357.5px;" width="10.5" height="10.5" viewBox="0 0 10.5 10.5"><path d="M1 1L9.5 9.5M9.5 1L1 9.5" stroke="#dcdcdc" stroke-width="1.7" fill="none"/></svg>
<div style="left:1811px;top:378px;width:478.8px;height:28.5px;background:#2a5244;"></div>
<svg style="left:1820.25px;top:387.5px;" width="7.5" height="9.5" viewBox="0 0 7.5 9.5"><path d="M0 0L7.5 4.75L0 9.5Z" fill="#8a8a8a"/></svg>
<div style="top:382.82px;height:18.85px;line-height:18.85px;font-size:14.5px;color:#dcdcdc;white-space:nowrap;left:1837.5px;letter-spacing:0.07px;">Black Strobe</div>
<div style="left:1957.3px;top:380px;width:323.7px;height:24px;background:#35705c;"></div>
<div style="left:1957.3px;top:380.5px;width:323.7px;height:23px;background:#000;"></div>
<div style="left:1957.3px;top:380.5px;width:185.3px;height:23px;background:#2b2b2b;"></div>
<div style="left:2147.6px;top:380.5px;width:120.9px;height:23px;background-color:#070707;background-image:linear-gradient(45deg,#1d1d1d 25%,transparent 25%,transparent 75%,#1d1d1d 75%),linear-gradient(45deg,#1d1d1d 25%,transparent 25%,transparent 75%,#1d1d1d 75%);background-size:8px 8px;background-position:0 0,4px 4px;"></div>
<div style="left:2142.6px;top:380px;width:5px;height:24px;background:#4b9178;"></div>
<div style="left:2268.5px;top:380.5px;width:1.5px;height:23px;background:#3c6657;"></div>
<div style="left:2291.3px;top:378px;width:28.5px;height:28.5px;background:#80ffd4;"></div>
<div style="top:383.65px;height:18.2px;line-height:18.2px;font-size:14px;color:#1a3a30;white-space:nowrap;left:2291.3px;width:28.5px;text-align:center;">B</div>
<div style="left:2321.3px;top:378px;width:28.5px;height:28.5px;background:#2a5244;"></div>
<div style="top:383.65px;height:18.2px;line-height:18.2px;font-size:14px;color:#dcdcdc;white-space:nowrap;left:2321.8px;width:28.5px;text-align:center;letter-spacing:-1px;">P.</div>
<div style="left:2351.3px;top:378px;width:28.5px;height:28.5px;background:#2a5244;"></div>
<svg style="left:2360.3px;top:387.5px;" width="10.5" height="10.5" viewBox="0 0 10.5 10.5"><path d="M1 1L9.5 9.5M9.5 1L1 9.5" stroke="#dcdcdc" stroke-width="1.7" fill="none"/></svg>
<div style="left:1811px;top:408px;width:478.8px;height:28.5px;background:#2a5244;"></div>
<svg style="left:1820.25px;top:417.5px;" width="7.5" height="9.5" viewBox="0 0 7.5 9.5"><path d="M0 0L7.5 4.75L0 9.5Z" fill="#8a8a8a"/></svg>
<div style="top:412.82px;height:18.85px;line-height:18.85px;font-size:14.5px;color:#dcdcdc;white-space:nowrap;left:1837.5px;letter-spacing:0.23px;">White Strobe</div>
<div style="left:1957.3px;top:410px;width:323.7px;height:24px;background:#35705c;"></div>
<div style="left:1957.3px;top:410.5px;width:323.7px;height:23px;background:#000;"></div>
<div style="left:1957.3px;top:410.5px;width:51.2px;height:23px;background:#2b2b2b;"></div>
<div style="left:2013.5px;top:410.5px;width:148px;height:23px;background-color:#070707;background-image:linear-gradient(45deg,#1d1d1d 25%,transparent 25%,transparent 75%,#1d1d1d 75%),linear-gradient(45deg,#1d1d1d 25%,transparent 25%,transparent 75%,#1d1d1d 75%);background-size:8px 8px;background-position:0 0,4px 4px;"></div>
<div style="left:2008.5px;top:410px;width:5px;height:24px;background:#4b9178;"></div>
<div style="left:2161.5px;top:410.5px;width:1.5px;height:23px;background:#3c6657;"></div>
<div style="left:2291.3px;top:408px;width:28.5px;height:28.5px;background:#80ffd4;"></div>
<div style="top:413.65px;height:18.2px;line-height:18.2px;font-size:14px;color:#1a3a30;white-space:nowrap;left:2291.3px;width:28.5px;text-align:center;">B</div>
<div style="left:2321.3px;top:408px;width:28.5px;height:28.5px;background:#2a5244;"></div>
<div style="top:413.65px;height:18.2px;line-height:18.2px;font-size:14px;color:#dcdcdc;white-space:nowrap;left:2321.8px;width:28.5px;text-align:center;letter-spacing:-1px;">P.</div>
<div style="left:2351.3px;top:408px;width:28.5px;height:28.5px;background:#2a5244;"></div>
<svg style="left:2360.3px;top:417.5px;" width="10.5" height="10.5" viewBox="0 0 10.5 10.5"><path d="M1 1L9.5 9.5M9.5 1L1 9.5" stroke="#dcdcdc" stroke-width="1.7" fill="none"/></svg>
<div style="left:1811px;top:438px;width:478.8px;height:28.5px;background:#2a5244;"></div>
<svg style="left:1820.25px;top:447.5px;" width="7.5" height="9.5" viewBox="0 0 7.5 9.5"><path d="M0 0L7.5 4.75L0 9.5Z" fill="#8a8a8a"/></svg>
<div style="top:442.82px;height:18.85px;line-height:18.85px;font-size:14.5px;color:#dcdcdc;white-space:nowrap;left:1837.5px;letter-spacing:-0.13px;">OSC Audio</div>
<div style="left:1957.3px;top:440px;width:323.7px;height:24px;background:#35705c;"></div>
<div style="left:1957.3px;top:440.5px;width:323.7px;height:23px;background:#000;"></div>
<div style="left:1957.3px;top:440.5px;width:318.7px;height:23px;background:#2b2b2b;"></div>
<div style="left:2276px;top:440px;width:5px;height:24px;background:#4b9178;"></div>
<div style="left:2291.3px;top:438px;width:28.5px;height:28.5px;background:#2a5244;"></div>
<div style="top:443.65px;height:18.2px;line-height:18.2px;font-size:14px;color:#dcdcdc;white-space:nowrap;left:2291.3px;width:28.5px;text-align:center;">B</div>
<div style="left:2321.3px;top:438px;width:28.5px;height:28.5px;background:#2a5244;"></div>
<div style="top:443.65px;height:18.2px;line-height:18.2px;font-size:14px;color:#dcdcdc;white-space:nowrap;left:2321.8px;width:28.5px;text-align:center;letter-spacing:-1px;">P.</div>
<div style="left:2351.3px;top:438px;width:28.5px;height:28.5px;background:#2a5244;"></div>
<svg style="left:2360.3px;top:447.5px;" width="10.5" height="10.5" viewBox="0 0 10.5 10.5"><path d="M1 1L9.5 9.5M9.5 1L1 9.5" stroke="#dcdcdc" stroke-width="1.7" fill="none"/></svg>
<div style="top:494.57px;height:18.85px;line-height:18.85px;font-size:14.5px;color:#262626;white-space:nowrap;left:1895px;width:400px;text-align:center;">Drop effect or mask here.</div>
<div style="left:0;top:0;width:2386px;height:1243.8px;overflow:hidden;">
<div style="left:0px;top:545.4px;width:360.3px;height:28.5px;background:#2c2c2c;border-radius:0 4px 0 0;"></div>
<div style="top:548.52px;height:20.15px;line-height:20.15px;font-size:15.5px;color:#d0d0d0;white-space:nowrap;left:-22px;width:400px;text-align:center;">Clip</div>
<div style="left:0px;top:575.3px;width:360.3px;height:42.7px;background:linear-gradient(90deg,#1f1f1f 0,#202020 40px,#5e5e5e 47px,#6b6b6b 53px,#8e8e8e 60px,#8e8e8e 66px,#6e6e6e 72px,#747474 150px,#767676 290px,#aaaaaa 296px,#aaaaaa 300px,#828282 305px,#585858 312px,#2c2c2c 322px,#2c2c2c 100%);"></div>
<div style="left:100px;top:575.3px;width:40px;height:7px;background:radial-gradient(ellipse at 50% 0,#b0b0b0 0,#9a9a9a 40%,rgba(120,120,120,0) 100%);"></div>
<div style="left:7px;top:583px;width:155.5px;height:27px;background:rgba(22,22,22,.93);border-radius:4px;"></div>
<div style="top:586.75px;height:19.5px;line-height:19.5px;font-size:15px;color:#dcdcdc;white-space:nowrap;left:14.5px;">TouchOutL</div>
<svg style="left:328.3px;top:588.8px;" width="16.4" height="16.4" viewBox="0 0 16.4 16.4"><g transform="translate(8.2,8.2)"><rect x="-1.85" y="-7.2" width="3.7" height="14.4" rx="1.1" transform="rotate(0)" fill="#dcdcdc"/><rect x="-1.85" y="-7.2" width="3.7" height="14.4" rx="1.1" transform="rotate(45)" fill="#dcdcdc"/><rect x="-1.85" y="-7.2" width="3.7" height="14.4" rx="1.1" transform="rotate(90)" fill="#dcdcdc"/><rect x="-1.85" y="-7.2" width="3.7" height="14.4" rx="1.1" transform="rotate(135)" fill="#dcdcdc"/><circle r="5.4" fill="#dcdcdc"/><circle r="2.81" fill="#2c2c2c"/></g></svg>
<div style="left:0px;top:619.5px;width:360.3px;height:28.5px;background:#2b2b2b;"></div>
<svg style="left:7.75px;top:628.75px;" width="7.5" height="9.5" viewBox="0 0 7.5 9.5"><path d="M0 0L7.5 4.75L0 9.5Z" fill="#8a8a8a"/></svg>
<div style="top:623.58px;height:18.85px;line-height:18.85px;font-size:14.5px;color:#dcdcdc;white-space:nowrap;left:24.5px;letter-spacing:0.47px;">Transport</div>
<div style="top:623.58px;height:18.85px;line-height:18.85px;font-size:14.5px;color:#dcdcdc;white-space:nowrap;right:2060.5px;text-align:right;letter-spacing:-0.34px;">BPM Sync</div>
<svg style="left:339px;top:630.75px;" width="10" height="5.5" viewBox="0 0 10 5.5"><path d="M0 0L10 0L5 5.5Z" fill="#e0e0e0"/></svg>
<div style="left:347.3px;top:649px;width:13px;height:595px;background:#1e1e1e;"></div>
<div style="left:347.3px;top:649px;width:13px;height:491px;background:#2c2c2c;"></div>
<div style="left:0px;top:649px;width:107px;height:59px;background:#2a5244;"></div>
<div style="left:108.1px;top:649px;width:237.9px;height:59px;background:#2a5244;"></div>
<svg style="left:7.75px;top:657.75px;" width="7.5" height="9.5" viewBox="0 0 7.5 9.5"><path d="M0 0L7.5 4.75L0 9.5Z" fill="#8a8a8a"/></svg>
<div style="left:38px;top:654px;width:61.2px;height:47.7px;border:1px solid #6f7f78;background:#2d5446;"></div>
<svg style="left:46px;top:655px" width="46" height="46" viewBox="0 0 46 46"><circle cx="22.500" cy="23" r="21.600" fill="#707070"/><circle cx="22.500" cy="23" r="19.800" fill="#858585" stroke="#b6b6b6" stroke-width="1.500"/><path d="M16 9.500c-4.500 1.200-7 5-6 8.800 1.300 3.600 6.800 3.200 7.300-1 .4-3-.7-4.600-1.300-7.800z" fill="#b4b4b4"/></svg>
<div style="top:650.73px;height:17.55px;line-height:17.55px;font-size:13.5px;color:#8fa89d;white-space:nowrap;left:117px;">TouchOutL</div>
<svg style="left:293.6px;top:659.2px;" width="11.2" height="11.2" viewBox="0 0 11.2 11.2"><path d="M1 10.200L10.200 1M5.400 1H10.200V5.800M1 5.400V10.200H5.800" stroke="#ececec" stroke-width="1.800" fill="none"/></svg>
<svg style="left:325px;top:659px;" width="11" height="11" viewBox="0 0 11 11"><path d="M1 1L10 10M10 1L1 10" stroke="#e8e8e8" stroke-width="1.8" fill="none"/></svg>
<div style="left:260.5px;top:681.5px;width:80.5px;height:20px;background:#80ffd4;border-radius:4px;"></div>
<div style="top:684.85px;height:14.3px;line-height:14.3px;font-size:11px;color:#1d4d3d;white-space:nowrap;left:260.5px;width:20px;text-align:center;">R</div>
<div style="top:684.85px;height:14.3px;line-height:14.3px;font-size:11px;color:#1d4d3d;white-space:nowrap;left:280.8px;width:20px;text-align:center;">G</div>
<div style="top:684.85px;height:14.3px;line-height:14.3px;font-size:11px;color:#1d4d3d;white-space:nowrap;left:301.1px;width:20px;text-align:center;">B</div>
<div style="top:684.85px;height:14.3px;line-height:14.3px;font-size:11px;color:#1d4d3d;white-space:nowrap;left:321.4px;width:20px;text-align:center;">A</div>
<div style="left:0px;top:709px;width:315.5px;height:28.5px;background:#2a5244;"></div>
<svg style="left:6.75px;top:720.25px;" width="9.5" height="7" viewBox="0 0 9.5 7"><path d="M0 0L9.5 0L4.75 7Z" fill="#8a8a8a"/></svg>
<div style="top:713.83px;height:18.85px;line-height:18.85px;font-size:14.5px;color:#dcdcdc;white-space:nowrap;left:24.5px;letter-spacing:0.44px;">Transform</div>
<div style="left:317px;top:709px;width:29px;height:28.5px;background:#2a5244;"></div>
<div style="top:714.65px;height:18.2px;line-height:18.2px;font-size:14px;color:#dcdcdc;white-space:nowrap;left:317.5px;width:29px;text-align:center;letter-spacing:-1px;">P.</div>
<div style="left:0px;top:739px;width:105.5px;height:28.5px;background:#161616;"></div>
<div style="left:107px;top:739px;width:238.4px;height:28.5px;background:#161616;"></div>
<div style="top:743.83px;height:18.85px;line-height:18.85px;font-size:14.5px;color:#dcdcdc;white-space:nowrap;right:2288.5px;text-align:right;letter-spacing:0.07px;">Position X</div>
<div style="top:743.83px;height:18.85px;line-height:18.85px;font-size:14.5px;color:#dcdcdc;white-space:nowrap;left:113px;">0</div>
<div style="left:176.8px;top:752.85px;width:7.4px;height:1.8px;background:#dcdcdc;"></div>
<div style="left:203.6px;top:752.85px;width:8.8px;height:1.8px;background:#dcdcdc;"></div>
<div style="left:207.1px;top:749.35px;width:1.8px;height:8.8px;background:#dcdcdc;"></div>
<div style="left:0px;top:769px;width:105.5px;height:28.5px;background:#161616;"></div>
<div style="left:107px;top:769px;width:238.4px;height:28.5px;background:#161616;"></div>
<div style="top:773.83px;height:18.85px;line-height:18.85px;font-size:14.5px;color:#dcdcdc;white-space:nowrap;right:2288.5px;text-align:right;letter-spacing:0.1px;">Position Y</div>
<div style="top:773.83px;height:18.85px;line-height:18.85px;font-size:14.5px;color:#dcdcdc;white-space:nowrap;left:113px;">0</div>
<div style="left:176.8px;top:782.85px;width:7.4px;height:1.8px;background:#dcdcdc;"></div>
<div style="left:203.6px;top:782.85px;width:8.8px;height:1.8px;background:#dcdcdc;"></div>
<div style="left:207.1px;top:779.35px;width:1.8px;height:8.8px;background:#dcdcdc;"></div>
<div style="left:0px;top:799px;width:105.5px;height:28.5px;background:#161616;"></div>
<div style="left:107px;top:799px;width:238.4px;height:28.5px;background:#161616;"></div>
<svg style="left:7.75px;top:808.5px;" width="7.5" height="9.5" viewBox="0 0 7.5 9.5"><path d="M0 0L7.5 4.75L0 9.5Z" fill="#8a8a8a"/></svg>
<div style="top:803.83px;height:18.85px;line-height:18.85px;font-size:14.5px;color:#dcdcdc;white-space:nowrap;left:24.5px;letter-spacing:-0.47px;">Scale</div>
<div style="top:803.83px;height:18.85px;line-height:18.85px;font-size:14.5px;color:#dcdcdc;white-space:nowrap;left:113px;letter-spacing:-0.34px;">100 %</div>
<div style="left:176.8px;top:812.85px;width:7.4px;height:1.8px;background:#dcdcdc;"></div>
<div style="left:203.6px;top:812.85px;width:8.8px;height:1.8px;background:#dcdcdc;"></div>
<div style="left:207.1px;top:809.35px;width:1.8px;height:8.8px;background:#dcdcdc;"></div>
<div style="left:233px;top:802.5px;width:104px;height:21px;background:#0b0b0b;"></div>
<div style="left:233px;top:802.5px;width:8.8px;height:21px;background:#2b2b2b;"></div>
<div style="left:241.8px;top:802px;width:5px;height:22px;background:#4b9178;"></div>
<div style="left:0px;top:829px;width:105.5px;height:28.5px;background:#161616;"></div>
<div style="left:107px;top:829px;width:238.4px;height:28.5px;background:#161616;"></div>
<svg style="left:7.75px;top:838.5px;" width="7.5" height="9.5" viewBox="0 0 7.5 9.5"><path d="M0 0L7.5 4.75L0 9.5Z" fill="#8a8a8a"/></svg>
<div style="top:833.83px;height:18.85px;line-height:18.85px;font-size:14.5px;color:#dcdcdc;white-space:nowrap;left:24.5px;letter-spacing:0.34px;">Rotation</div>
<div style="top:833.83px;height:18.85px;line-height:18.85px;font-size:14.5px;color:#dcdcdc;white-space:nowrap;left:113px;">0 °</div>
<div style="left:176.8px;top:842.85px;width:7.4px;height:1.8px;background:#dcdcdc;"></div>
<div style="left:203.6px;top:842.85px;width:8.8px;height:1.8px;background:#dcdcdc;"></div>
<div style="left:207.1px;top:839.35px;width:1.8px;height:8.8px;background:#dcdcdc;"></div>
<div style="left:233px;top:832.5px;width:104px;height:21px;background:#0b0b0b;"></div>
<div style="left:233px;top:832.5px;width:48.8px;height:21px;background:#0b0b0b;"></div>
<div style="left:281.8px;top:832px;width:5px;height:22px;background:#4b9178;"></div>
<div style="left:0px;top:859px;width:105.5px;height:28.5px;background:#161616;"></div>
<div style="left:107px;top:859px;width:238.4px;height:28.5px;background:#161616;"></div>
<svg style="left:7.75px;top:868.5px;" width="7.5" height="9.5" viewBox="0 0 7.5 9.5"><path d="M0 0L7.5 4.75L0 9.5Z" fill="#8a8a8a"/></svg>
<div style="top:863.83px;height:18.85px;line-height:18.85px;font-size:14.5px;color:#dcdcdc;white-space:nowrap;left:24.5px;letter-spacing:0.31px;">Anchor</div>
<div style="top:863.83px;height:18.85px;line-height:18.85px;font-size:14.5px;color:#dcdcdc;white-space:nowrap;left:113px;">0</div>
<div style="left:176.8px;top:872.85px;width:7.4px;height:1.8px;background:#dcdcdc;"></div>
<div style="left:203.6px;top:872.85px;width:8.8px;height:1.8px;background:#dcdcdc;"></div>
<div style="left:207.1px;top:869.35px;width:1.8px;height:8.8px;background:#dcdcdc;"></div>
<div style="left:233px;top:862.5px;width:104px;height:21px;background:#0b0b0b;"></div>
<div style="left:233px;top:862.5px;width:48.8px;height:21px;background:#0b0b0b;"></div>
<div style="left:281.8px;top:862px;width:5px;height:22px;background:#4b9178;"></div>
<div style="left:0px;top:889px;width:255.4px;height:28.5px;background:#2a5244;"></div>
<svg style="left:8.25px;top:898.5px;" width="7.5" height="9.5" viewBox="0 0 7.5 9.5"><path d="M0 0L7.5 4.75L0 9.5Z" fill="#8a8a8a"/></svg>
<div style="top:893.83px;height:18.85px;line-height:18.85px;font-size:14.5px;color:#dcdcdc;white-space:nowrap;left:24.5px;letter-spacing:0.72px;">Mirror</div>
<div style="left:144px;top:891px;width:102.5px;height:24px;background:#35705c;"></div>
<div style="left:144px;top:891.5px;width:102.5px;height:23px;background:#000;"></div>
<div style="left:144px;top:891.5px;width:97.5px;height:23px;background:#2b2b2b;"></div>
<div style="left:241.5px;top:891px;width:5px;height:24px;background:#4b9178;"></div>
<div style="left:256.9px;top:889px;width:28.5px;height:28.5px;background:#2a5244;"></div>
<div style="top:894.65px;height:18.2px;line-height:18.2px;font-size:14px;color:#dcdcdc;white-space:nowrap;left:256.9px;width:28.5px;text-align:center;">B</div>
<div style="left:286.9px;top:889px;width:28.5px;height:28.5px;background:#2a5244;"></div>
<div style="top:894.65px;height:18.2px;line-height:18.2px;font-size:14px;color:#dcdcdc;white-space:nowrap;left:287.4px;width:28.5px;text-align:center;letter-spacing:-1px;">P.</div>
<div style="left:316.9px;top:889px;width:28.5px;height:28.5px;background:#2a5244;"></div>
<svg style="left:325.9px;top:898.5px;" width="10.5" height="10.5" viewBox="0 0 10.5 10.5"><path d="M1 1L9.5 9.5M9.5 1L1 9.5" stroke="#dcdcdc" stroke-width="1.7" fill="none"/></svg>
<div style="left:0px;top:919px;width:255.4px;height:28.5px;background:#2a5244;"></div>
<svg style="left:6.75px;top:930.25px;" width="9.5" height="7" viewBox="0 0 9.5 7"><path d="M0 0L9.5 0L4.75 7Z" fill="#8a8a8a"/></svg>
<div style="top:923.83px;height:18.85px;line-height:18.85px;font-size:14.5px;color:#dcdcdc;white-space:nowrap;left:24.5px;letter-spacing:-0.19px;">Slide</div>
<div style="left:256.9px;top:919px;width:28.5px;height:28.5px;background:#2a5244;"></div>
<div style="top:924.65px;height:18.2px;line-height:18.2px;font-size:14px;color:#dcdcdc;white-space:nowrap;left:256.9px;width:28.5px;text-align:center;">B</div>
<div style="left:286.9px;top:919px;width:28.5px;height:28.5px;background:#2a5244;"></div>
<div style="top:924.65px;height:18.2px;line-height:18.2px;font-size:14px;color:#dcdcdc;white-space:nowrap;left:287.4px;width:28.5px;text-align:center;letter-spacing:-1px;">P.</div>
<div style="left:316.9px;top:919px;width:28.5px;height:28.5px;background:#2a5244;"></div>
<svg style="left:325.9px;top:928.5px;" width="10.5" height="10.5" viewBox="0 0 10.5 10.5"><path d="M1 1L9.5 9.5M9.5 1L1 9.5" stroke="#dcdcdc" stroke-width="1.7" fill="none"/></svg>
<div style="left:0px;top:949px;width:105.5px;height:28.5px;background:#161616;"></div>
<div style="left:107px;top:949px;width:208.4px;height:28.5px;background:#161616;"></div>
<div style="top:953.83px;height:18.85px;line-height:18.85px;font-size:14.5px;color:#dcdcdc;white-space:nowrap;right:2288.5px;text-align:right;letter-spacing:-0.04px;">Blend Mode</div>
<div style="top:953.83px;height:18.85px;line-height:18.85px;font-size:14.5px;color:#dcdcdc;white-space:nowrap;left:113px;letter-spacing:0.12px;">Alpha</div>
<svg style="left:182.5px;top:961px;" width="10" height="5.5" viewBox="0 0 10 5.5"><path d="M0 0L10 0L5 5.5Z" fill="#e0e0e0"/></svg>
<div style="left:316.9px;top:949px;width:28.5px;height:28.5px;background:#161616;"></div>
<div style="top:954.65px;height:18.2px;line-height:18.2px;font-size:14px;color:#dcdcdc;white-space:nowrap;left:317.4px;width:28.5px;text-align:center;letter-spacing:-1px;">P.</div>
<div style="left:0px;top:979px;width:105.5px;height:28.5px;background:#161616;"></div>
<div style="left:107px;top:979px;width:238.4px;height:28.5px;background:#161616;"></div>
<div style="top:983.83px;height:18.85px;line-height:18.85px;font-size:14.5px;color:#dcdcdc;white-space:nowrap;right:2288.5px;text-align:right;letter-spacing:0.23px;">Opacity</div>
<div style="top:983.83px;height:18.85px;line-height:18.85px;font-size:14.5px;color:#dcdcdc;white-space:nowrap;left:113px;letter-spacing:-0.34px;">100 %</div>
<div style="left:176.8px;top:992.85px;width:7.4px;height:1.8px;background:#dcdcdc;"></div>
<div style="left:203.6px;top:992.85px;width:8.8px;height:1.8px;background:#dcdcdc;"></div>
<div style="left:207.1px;top:989.35px;width:1.8px;height:8.8px;background:#dcdcdc;"></div>
<div style="left:233px;top:982.5px;width:104px;height:21px;background:#0b0b0b;"></div>
<div style="left:233px;top:982.5px;width:99px;height:21px;background:#2b2b2b;"></div>
<div style="left:332px;top:982px;width:5px;height:22px;background:#4b9178;"></div>
<div style="left:0px;top:1009px;width:105.5px;height:28.5px;background:#161616;"></div>
<div style="left:107px;top:1009px;width:238.4px;height:28.5px;background:#161616;"></div>
<div style="top:1013.83px;height:18.85px;line-height:18.85px;font-size:14.5px;color:#dcdcdc;white-space:nowrap;right:2288.5px;text-align:right;">X</div>
<div style="top:1013.83px;height:18.85px;line-height:18.85px;font-size:14.5px;color:#dcdcdc;white-space:nowrap;left:113px;letter-spacing:-0.06px;">0.34</div>
<div style="left:176.8px;top:1022.85px;width:7.4px;height:1.8px;background:#dcdcdc;"></div>
<div style="left:203.6px;top:1022.85px;width:8.8px;height:1.8px;background:#dcdcdc;"></div>
<div style="left:207.1px;top:1019.35px;width:1.8px;height:8.8px;background:#dcdcdc;"></div>
<div style="left:233px;top:1012.5px;width:104px;height:21px;background:#0b0b0b;"></div>
<div style="left:233px;top:1012.5px;width:32.2px;height:21px;background:#2b2b2b;"></div>
<div style="left:265.2px;top:1012px;width:5px;height:22px;background:#4b9178;"></div>
<div style="left:0px;top:1039px;width:105.5px;height:28.5px;background:#161616;"></div>
<div style="left:107px;top:1039px;width:238.4px;height:28.5px;background:#161616;"></div>
<div style="top:1043.83px;height:18.85px;line-height:18.85px;font-size:14.5px;color:#dcdcdc;white-space:nowrap;right:2288.5px;text-align:right;">Y</div>
<div style="top:1043.83px;height:18.85px;line-height:18.85px;font-size:14.5px;color:#dcdcdc;white-space:nowrap;left:113px;">0</div>
<div style="left:176.8px;top:1052.85px;width:7.4px;height:1.8px;background:#dcdcdc;"></div>
<div style="left:203.6px;top:1052.85px;width:8.8px;height:1.8px;background:#dcdcdc;"></div>
<div style="left:207.1px;top:1049.35px;width:1.8px;height:8.8px;background:#dcdcdc;"></div>
<div style="left:233px;top:1042.5px;width:104px;height:21px;background:#0b0b0b;"></div>
<div style="left:233px;top:1042px;width:5px;height:22px;background:#4b9178;"></div>
<div style="left:0px;top:1069px;width:105.5px;height:28.5px;background:#161616;"></div>
<div style="left:107px;top:1069px;width:238.4px;height:28.5px;background:#161616;"></div>
<div style="top:1073.83px;height:18.85px;line-height:18.85px;font-size:14.5px;color:#dcdcdc;white-space:nowrap;right:2288.5px;text-align:right;letter-spacing:-0.27px;">Black BG</div>
<div style="left:111.5px;top:1076px;width:16px;height:15px;border:1.5px solid #8c8c8c;border-radius:3px;"></div>
<div style="left:0px;top:1099px;width:255.4px;height:28.5px;background:#2a5244;"></div>
<svg style="left:6.75px;top:1110.25px;" width="9.5" height="7" viewBox="0 0 9.5 7"><path d="M0 0L9.5 0L4.75 7Z" fill="#8a8a8a"/></svg>
<div style="top:1103.83px;height:18.85px;line-height:18.85px;font-size:14.5px;color:#dcdcdc;white-space:nowrap;left:24.5px;letter-spacing:0.72px;">Mirror</div>
<div style="left:256.9px;top:1099px;width:28.5px;height:28.5px;background:#2a5244;"></div>
<div style="top:1104.65px;height:18.2px;line-height:18.2px;font-size:14px;color:#dcdcdc;white-space:nowrap;left:256.9px;width:28.5px;text-align:center;">B</div>
<div style="left:286.9px;top:1099px;width:28.5px;height:28.5px;background:#2a5244;"></div>
<div style="top:1104.65px;height:18.2px;line-height:18.2px;font-size:14px;color:#dcdcdc;white-space:nowrap;left:287.4px;width:28.5px;text-align:center;letter-spacing:-1px;">P.</div>
<div style="left:316.9px;top:1099px;width:28.5px;height:28.5px;background:#2a5244;"></div>
<svg style="left:325.9px;top:1108.5px;" width="10.5" height="10.5" viewBox="0 0 10.5 10.5"><path d="M1 1L9.5 9.5M9.5 1L1 9.5" stroke="#dcdcdc" stroke-width="1.7" fill="none"/></svg>
<div style="left:0px;top:1129px;width:105.5px;height:28.5px;background:#161616;"></div>
<div style="left:107px;top:1129px;width:208.4px;height:28.5px;background:#161616;"></div>
<div style="top:1133.83px;height:18.85px;line-height:18.85px;font-size:14.5px;color:#dcdcdc;white-space:nowrap;right:2288.5px;text-align:right;letter-spacing:-0.04px;">Blend Mode</div>
<div style="top:1133.83px;height:18.85px;line-height:18.85px;font-size:14.5px;color:#dcdcdc;white-space:nowrap;left:113px;letter-spacing:0.12px;">Alpha</div>
<svg style="left:182.5px;top:1141px;" width="10" height="5.5" viewBox="0 0 10 5.5"><path d="M0 0L10 0L5 5.5Z" fill="#e0e0e0"/></svg>
<div style="left:316.9px;top:1129px;width:28.5px;height:28.5px;background:#161616;"></div>
<div style="top:1134.65px;height:18.2px;line-height:18.2px;font-size:14px;color:#dcdcdc;white-space:nowrap;left:317.4px;width:28.5px;text-align:center;letter-spacing:-1px;">P.</div>
<div style="left:0px;top:1159px;width:105.5px;height:28.5px;background:#161616;"></div>
<div style="left:107px;top:1159px;width:238.4px;height:28.5px;background:#161616;"></div>
<div style="top:1163.83px;height:18.85px;line-height:18.85px;font-size:14.5px;color:#dcdcdc;white-space:nowrap;right:2288.5px;text-align:right;letter-spacing:0.23px;">Opacity</div>
<div style="top:1163.83px;height:18.85px;line-height:18.85px;font-size:14.5px;color:#dcdcdc;white-space:nowrap;left:113px;letter-spacing:-0.34px;">100 %</div>
<div style="left:176.8px;top:1172.85px;width:7.4px;height:1.8px;background:#dcdcdc;"></div>
<div style="left:203.6px;top:1172.85px;width:8.8px;height:1.8px;background:#dcdcdc;"></div>
<div style="left:207.1px;top:1169.35px;width:1.8px;height:8.8px;background:#dcdcdc;"></div>
<div style="left:233px;top:1162.5px;width:104px;height:21px;background:#0b0b0b;"></div>
<div style="left:233px;top:1162.5px;width:99px;height:21px;background:#2b2b2b;"></div>
<div style="left:332px;top:1162px;width:5px;height:22px;background:#4b9178;"></div>
<div style="left:0px;top:1189px;width:105.5px;height:28.5px;background:#161616;"></div>
<div style="left:107px;top:1189px;width:238.4px;height:28.5px;background:#161616;"></div>
<div style="top:1193.83px;height:18.85px;line-height:18.85px;font-size:14.5px;color:#dcdcdc;white-space:nowrap;right:2288.5px;text-align:right;">X</div>
<div style="top:1193.83px;height:18.85px;line-height:18.85px;font-size:14.5px;color:#dcdcdc;white-space:nowrap;left:113px;letter-spacing:-0.06px;">0.34</div>
<div style="left:176.8px;top:1202.85px;width:7.4px;height:1.8px;background:#dcdcdc;"></div>
<div style="left:203.6px;top:1202.85px;width:8.8px;height:1.8px;background:#dcdcdc;"></div>
<div style="left:207.1px;top:1199.35px;width:1.8px;height:8.8px;background:#dcdcdc;"></div>
<div style="left:233px;top:1192.5px;width:104px;height:21px;background:#0b0b0b;"></div>
<div style="left:233px;top:1192.5px;width:32.2px;height:21px;background:#2b2b2b;"></div>
<div style="left:265.2px;top:1192px;width:5px;height:22px;background:#4b9178;"></div>
<div style="left:0px;top:1219px;width:105.5px;height:28.5px;background:#161616;"></div>
<div style="left:107px;top:1219px;width:238.4px;height:28.5px;background:#161616;"></div>
<div style="top:1223.83px;height:18.85px;line-height:18.85px;font-size:14.5px;color:#dcdcdc;white-space:nowrap;right:2288.5px;text-align:right;">Y</div>
<div style="top:1223.83px;height:18.85px;line-height:18.85px;font-size:14.5px;color:#dcdcdc;white-space:nowrap;left:113px;">0</div>
<div style="left:176.8px;top:1232.85px;width:7.4px;height:1.8px;background:#dcdcdc;"></div>
<div style="left:203.6px;top:1232.85px;width:8.8px;height:1.8px;background:#dcdcdc;"></div>
<div style="left:207.1px;top:1229.35px;width:1.8px;height:8.8px;background:#dcdcdc;"></div>
<div style="left:233px;top:1222.5px;width:104px;height:21px;background:#0b0b0b;"></div>
<div style="left:233px;top:1222px;width:5px;height:22px;background:#4b9178;"></div>
</div>
<div style="left:364.2px;top:545.4px;width:126.3px;height:24.8px;background:#383838;border-radius:3px;"></div>
<div style="top:548.27px;height:18.85px;line-height:18.85px;font-size:14.5px;color:#dcdcdc;white-space:nowrap;left:370.5px;letter-spacing:0.42px;">Composition</div>
<div style="left:492.1px;top:545.4px;width:24.7px;height:24.8px;background:#383838;border-radius:3px;"></div>
<svg style="left:499.5px;top:552.9px;" width="10" height="10" viewBox="0 0 10 10"><path d="M1 1L9 9M9 1L1 9" stroke="#dcdcdc" stroke-width="1.6" fill="none"/></svg>
<div style="left:518.1px;top:545.4px;width:25px;height:24.8px;background:#383838;border-radius:3px;"></div>
<div style="top:549.12px;height:17.55px;line-height:17.55px;font-size:13.5px;color:#dcdcdc;white-space:nowrap;left:518.1px;width:25px;text-align:center;">B</div>
<div style="left:544.4px;top:545.4px;width:82.5px;height:24.8px;background:#2a2a2a;border-radius:3px;"></div>
<div style="left:604.5px;top:545.4px;width:22.4px;height:24.8px;background:#383838;border-radius:3px;"></div>
<div style="top:549.12px;height:17.55px;line-height:17.55px;font-size:13.5px;color:#dcdcdc;white-space:nowrap;left:603.2px;width:25px;text-align:center;">M</div>
<div style="left:628.3px;top:545.4px;width:117px;height:24.8px;background:#2a2a2a;border-radius:3px;"></div>
<div style="left:650.9px;top:545.4px;width:22.1px;height:24.8px;background:#383838;border-radius:3px;"></div>
<div style="top:549.12px;height:17.55px;line-height:17.55px;font-size:13.5px;color:#dcdcdc;white-space:nowrap;left:649.5px;width:25px;text-align:center;">S</div>
<div style="left:364.2px;top:574.4px;width:57.5px;height:83.5px;background:#383838;border-radius:3px;"></div>
<svg style="left:387.25px;top:611.15px;" width="11.5" height="11.5" viewBox="0 0 11.5 11.5"><path d="M1 1L10.5 10.5M10.5 1L1 10.5" stroke="#e6e6e6" stroke-width="1.8" fill="none"/></svg>
<div style="left:423.2px;top:574.4px;width:57.2px;height:54.5px;background:#383838;border-radius:3px;"></div>
<div style="top:592.65px;height:19.5px;line-height:19.5px;font-size:15px;color:#dcdcdc;white-space:nowrap;left:431.5px;width:40px;text-align:center;">B</div>
<div style="left:482px;top:574.4px;width:61.1px;height:54.5px;background:#383838;border-radius:3px;"></div>
<div style="top:592.65px;height:19.5px;line-height:19.5px;font-size:15px;color:#dcdcdc;white-space:nowrap;left:492.5px;width:40px;text-align:center;">S</div>
<div style="left:423.2px;top:630.5px;width:119.9px;height:27.4px;background:#383838;border-radius:3px;"></div>
<div style="top:635.77px;height:18.85px;line-height:18.85px;font-size:14.5px;color:#dcdcdc;white-space:nowrap;left:431px;letter-spacing:0.12px;">50 Add</div>
<svg style="left:527px;top:642.65px;" width="9" height="6.5" viewBox="0 0 9 6.5"><path d="M0 0L9 0L4.5 6.5Z" fill="#f0f0f0"/></svg>
<div style="left:544.4px;top:574.4px;width:82.5px;height:83.5px;background:#232323;border-radius:3px;"></div>
<div style="left:544.4px;top:574.4px;width:82.5px;height:22.3px;background:#4a8d75;border-radius:3px;"></div>
<div style="top:577.77px;height:16.25px;line-height:16.25px;font-size:12.5px;color:#d4efe5;white-space:nowrap;left:570.5px;width:30px;text-align:center;">V</div>
<div style="left:628.3px;top:574.4px;width:117px;height:83.5px;background:#1a1a1a;"></div>
<div style="left:364.2px;top:659.4px;width:262.7px;height:24.6px;background:#383838;border-radius:3px;"></div>
<div style="top:662.98px;height:18.85px;line-height:18.85px;font-size:14.5px;color:#dcdcdc;white-space:nowrap;left:370.5px;">Layer5</div>
<div style="left:628.3px;top:659.4px;width:112.5px;height:24.6px;background:#393939;border-radius:3px;"></div>
<div style="left:364.2px;top:688.15px;width:57.5px;height:83.5px;background:#383838;border-radius:3px;"></div>
<svg style="left:387.25px;top:724.9px;" width="11.5" height="11.5" viewBox="0 0 11.5 11.5"><path d="M1 1L10.5 10.5M10.5 1L1 10.5" stroke="#e6e6e6" stroke-width="1.8" fill="none"/></svg>
<div style="left:423.2px;top:688.15px;width:57.2px;height:54.5px;background:#383838;border-radius:3px;"></div>
<div style="top:706.4px;height:19.5px;line-height:19.5px;font-size:15px;color:#dcdcdc;white-space:nowrap;left:431.5px;width:40px;text-align:center;">B</div>
<div style="left:482px;top:688.15px;width:61.1px;height:54.5px;background:#383838;border-radius:3px;"></div>
<div style="top:706.4px;height:19.5px;line-height:19.5px;font-size:15px;color:#dcdcdc;white-space:nowrap;left:492.5px;width:40px;text-align:center;">S</div>
<div style="left:423.2px;top:744.25px;width:119.9px;height:27.4px;background:#383838;border-radius:3px;"></div>
<div style="top:749.52px;height:18.85px;line-height:18.85px;font-size:14.5px;color:#dcdcdc;white-space:nowrap;left:431px;letter-spacing:0.12px;">50 Add</div>
<svg style="left:527px;top:756.4px;" width="9" height="6.5" viewBox="0 0 9 6.5"><path d="M0 0L9 0L4.5 6.5Z" fill="#f0f0f0"/></svg>
<div style="left:544.4px;top:688.15px;width:82.5px;height:83.5px;background:#1a1a1a;border-radius:3px;"></div>
<div style="left:544.4px;top:749.35px;width:82.5px;height:22.3px;background:#4a8d75;border-radius:3px;"></div>
<div style="top:752.73px;height:16.25px;line-height:16.25px;font-size:12.5px;color:#d4efe5;white-space:nowrap;left:570.5px;width:30px;text-align:center;">V</div>
<div style="left:628.3px;top:688.15px;width:117px;height:83.5px;background:#1a1a1a;"></div>
<div style="left:364.2px;top:773.15px;width:262.7px;height:24.6px;background:#383838;border-radius:3px;"></div>
<div style="top:776.73px;height:18.85px;line-height:18.85px;font-size:14.5px;color:#dcdcdc;white-space:nowrap;left:370.5px;">Layer 4</div>
<div style="left:628.3px;top:773.15px;width:112.5px;height:24.6px;background:#393939;border-radius:3px;"></div>
<div style="left:364.2px;top:801.9px;width:57.5px;height:83.5px;background:#383838;border-radius:3px;"></div>
<svg style="left:387.25px;top:838.65px;" width="11.5" height="11.5" viewBox="0 0 11.5 11.5"><path d="M1 1L10.5 10.5M10.5 1L1 10.5" stroke="#e6e6e6" stroke-width="1.8" fill="none"/></svg>
<div style="left:423.2px;top:801.9px;width:57.2px;height:54.5px;background:#383838;border-radius:3px;"></div>
<div style="top:820.15px;height:19.5px;line-height:19.5px;font-size:15px;color:#dcdcdc;white-space:nowrap;left:431.5px;width:40px;text-align:center;">B</div>
<div style="left:482px;top:801.9px;width:61.1px;height:54.5px;background:#383838;border-radius:3px;"></div>
<div style="top:820.15px;height:19.5px;line-height:19.5px;font-size:15px;color:#dcdcdc;white-space:nowrap;left:492.5px;width:40px;text-align:center;">S</div>
<div style="left:423.2px;top:858px;width:119.9px;height:27.4px;background:#383838;border-radius:3px;"></div>
<div style="top:863.27px;height:18.85px;line-height:18.85px;font-size:14.5px;color:#dcdcdc;white-space:nowrap;left:431px;letter-spacing:0.12px;">50 Add</div>
<svg style="left:527px;top:870.15px;" width="9" height="6.5" viewBox="0 0 9 6.5"><path d="M0 0L9 0L4.5 6.5Z" fill="#f0f0f0"/></svg>
<div style="left:544.4px;top:801.9px;width:82.5px;height:83.5px;background:#1a1a1a;border-radius:3px;"></div>
<div style="left:544.4px;top:863.1px;width:82.5px;height:22.3px;background:#4a8d75;border-radius:3px;"></div>
<div style="top:866.48px;height:16.25px;line-height:16.25px;font-size:12.5px;color:#d4efe5;white-space:nowrap;left:570.5px;width:30px;text-align:center;">V</div>
<div style="left:628.3px;top:801.9px;width:117px;height:83.5px;background:#1a1a1a;"></div>
<div style="left:364.2px;top:886.9px;width:262.7px;height:24.6px;background:#383838;border-radius:3px;"></div>
<div style="top:890.48px;height:18.85px;line-height:18.85px;font-size:14.5px;color:#dcdcdc;white-space:nowrap;left:370.5px;">Layer 3</div>
<div style="left:628.3px;top:886.9px;width:112.5px;height:24.6px;background:#393939;border-radius:3px;"></div>
<div style="left:364.2px;top:915.65px;width:57.5px;height:83.5px;background:#383838;border-radius:3px;"></div>
<svg style="left:387.25px;top:952.4px;" width="11.5" height="11.5" viewBox="0 0 11.5 11.5"><path d="M1 1L10.5 10.5M10.5 1L1 10.5" stroke="#e6e6e6" stroke-width="1.8" fill="none"/></svg>
<div style="left:423.2px;top:915.65px;width:57.2px;height:54.5px;background:#383838;border-radius:3px;"></div>
<div style="top:933.9px;height:19.5px;line-height:19.5px;font-size:15px;color:#dcdcdc;white-space:nowrap;left:431.5px;width:40px;text-align:center;">B</div>
<div style="left:482px;top:915.65px;width:61.1px;height:54.5px;background:#383838;border-radius:3px;"></div>
<div style="top:933.9px;height:19.5px;line-height:19.5px;font-size:15px;color:#dcdcdc;white-space:nowrap;left:492.5px;width:40px;text-align:center;">S</div>
<div style="left:423.2px;top:971.75px;width:119.9px;height:27.4px;background:#383838;border-radius:3px;"></div>
<div style="top:977.02px;height:18.85px;line-height:18.85px;font-size:14.5px;color:#dcdcdc;white-space:nowrap;left:431px;letter-spacing:0.12px;">50 Add</div>
<svg style="left:527px;top:983.9px;" width="9" height="6.5" viewBox="0 0 9 6.5"><path d="M0 0L9 0L4.5 6.5Z" fill="#f0f0f0"/></svg>
<div style="left:544.4px;top:915.65px;width:82.5px;height:83.5px;background:#232323;border-radius:3px;"></div>
<div style="left:544.4px;top:915.65px;width:82.5px;height:22.3px;background:#4a8d75;border-radius:3px;"></div>
<div style="top:919.02px;height:16.25px;line-height:16.25px;font-size:12.5px;color:#d4efe5;white-space:nowrap;left:570.5px;width:30px;text-align:center;">V</div>
<div style="left:628.3px;top:915.65px;width:117px;height:83.5px;background:#1a1a1a;"></div>
<div style="left:364.2px;top:1000.65px;width:262.7px;height:24.6px;background:#383838;border-radius:3px;"></div>
<div style="top:1004.23px;height:18.85px;line-height:18.85px;font-size:14.5px;color:#dcdcdc;white-space:nowrap;left:370.5px;">Layer 2</div>
<div style="left:628.3px;top:1000.65px;width:112.5px;height:24.6px;background:#393939;border-radius:3px;"></div>
<div style="left:364.2px;top:1029.4px;width:57.5px;height:83.5px;background:#383838;border-radius:3px;"></div>
<svg style="left:387.25px;top:1066.15px;" width="11.5" height="11.5" viewBox="0 0 11.5 11.5"><path d="M1 1L10.5 10.5M10.5 1L1 10.5" stroke="#e6e6e6" stroke-width="1.8" fill="none"/></svg>
<div style="left:423.2px;top:1029.4px;width:57.2px;height:54.5px;background:#383838;border-radius:3px;"></div>
<div style="top:1047.65px;height:19.5px;line-height:19.5px;font-size:15px;color:#dcdcdc;white-space:nowrap;left:431.5px;width:40px;text-align:center;">B</div>
<div style="left:482px;top:1029.4px;width:61.1px;height:54.5px;background:#383838;border-radius:3px;"></div>
<div style="top:1047.65px;height:19.5px;line-height:19.5px;font-size:15px;color:#dcdcdc;white-space:nowrap;left:492.5px;width:40px;text-align:center;">S</div>
<div style="left:423.2px;top:1085.5px;width:119.9px;height:27.4px;background:#383838;border-radius:3px;"></div>
<div style="top:1090.78px;height:18.85px;line-height:18.85px;font-size:14.5px;color:#dcdcdc;white-space:nowrap;left:431px;letter-spacing:0.12px;">50 Add</div>
<svg style="left:527px;top:1097.65px;" width="9" height="6.5" viewBox="0 0 9 6.5"><path d="M0 0L9 0L4.5 6.5Z" fill="#f0f0f0"/></svg>
<div style="left:544.4px;top:1029.4px;width:82.5px;height:83.5px;background:#232323;border-radius:3px;"></div>
<div style="left:544.4px;top:1029.4px;width:82.5px;height:22.3px;background:#4a8d75;border-radius:3px;"></div>
<div style="top:1032.78px;height:16.25px;line-height:16.25px;font-size:12.5px;color:#d4efe5;white-space:nowrap;left:570.5px;width:30px;text-align:center;">V</div>
<div style="left:628.3px;top:1029.4px;width:117px;height:83.5px;background:#1a1a1a;"></div>
<div style="left:364.2px;top:1114.4px;width:262.7px;height:24.6px;background:#80ffd4;border-radius:3px;"></div>
<div style="top:1117.98px;height:18.85px;line-height:18.85px;font-size:14.5px;color:#143c30;white-space:nowrap;left:370.5px;">Layer 1</div>
<div style="left:628.3px;top:1114.4px;width:112.5px;height:24.6px;background:#393939;border-radius:3px;"></div>
<div style="left:744.5px;top:1121px;width:2.5px;height:18px;background:#a04a7c;"></div>
<div style="left:752px;top:545.5px;width:110px;height:24.4px;background:#383838;border-radius:3px;"></div>
<div style="top:549.08px;height:18.85px;line-height:18.85px;font-size:14.5px;color:#dcdcdc;white-space:nowrap;left:752.5px;width:110px;text-align:center;">Column 1</div>
<div style="left:864.5px;top:545.5px;width:110px;height:24.4px;background:#383838;border-radius:3px;"></div>
<div style="top:549.08px;height:18.85px;line-height:18.85px;font-size:14.5px;color:#dcdcdc;white-space:nowrap;left:865px;width:110px;text-align:center;">Column 2</div>
<div style="left:977px;top:545.5px;width:110px;height:24.4px;background:#383838;border-radius:3px;"></div>
<div style="top:549.08px;height:18.85px;line-height:18.85px;font-size:14.5px;color:#dcdcdc;white-space:nowrap;left:977.5px;width:110px;text-align:center;">Column 3</div>
<div style="left:1089.5px;top:545.5px;width:110px;height:24.4px;background:#383838;border-radius:3px;"></div>
<div style="top:549.08px;height:18.85px;line-height:18.85px;font-size:14.5px;color:#dcdcdc;white-space:nowrap;left:1090px;width:110px;text-align:center;">Column 4</div>
<div style="left:1202px;top:545.5px;width:110px;height:24.4px;background:#383838;border-radius:3px;"></div>
<div style="top:549.08px;height:18.85px;line-height:18.85px;font-size:14.5px;color:#dcdcdc;white-space:nowrap;left:1202.5px;width:110px;text-align:center;">Column 5</div>
<div style="left:1314.5px;top:545.5px;width:110px;height:24.4px;background:#383838;border-radius:3px;"></div>
<div style="top:549.08px;height:18.85px;line-height:18.85px;font-size:14.5px;color:#dcdcdc;white-space:nowrap;left:1315px;width:110px;text-align:center;">Column 6</div>
<div style="left:1427px;top:545.5px;width:110px;height:24.4px;background:#383838;border-radius:3px;"></div>
<div style="top:549.08px;height:18.85px;line-height:18.85px;font-size:14.5px;color:#dcdcdc;white-space:nowrap;left:1427.5px;width:110px;text-align:center;">Column 7</div>
<div style="left:1539.5px;top:545.5px;width:102.1px;height:24.4px;background:#383838;border-radius:3px 0 0 3px;"></div>
<div style="top:549.08px;height:18.85px;line-height:18.85px;font-size:14.5px;color:#dcdcdc;white-space:nowrap;left:1540px;width:110px;text-align:center;">Column 8</div>
<svg style="left:0;top:0" width="0" height="0"><defs><clipPath id="c169"><rect x="0" y="10.8" width="110" height="63.2"/></clipPath><filter id="gl05" filterUnits="userSpaceOnUse" x="-10" y="-10" width="130" height="105"><feGaussianBlur stdDeviation="0.5"/></filter><filter id="gl" filterUnits="userSpaceOnUse" x="-10" y="-10" width="130" height="105"><feGaussianBlur stdDeviation="2"/></filter><filter id="gl3" filterUnits="userSpaceOnUse" x="-10" y="-10" width="130" height="105"><feGaussianBlur stdDeviation="3.5"/></filter><filter id="gl1" filterUnits="userSpaceOnUse" x="-10" y="-10" width="130" height="105"><feGaussianBlur stdDeviation="1"/></filter><radialGradient id="hg_rings" cx="50%" cy="50%" r="50%"><stop offset="0%" stop-color="#04101f"/><stop offset="38%" stop-color="#0a2238"/><stop offset="50%" stop-color="#2a5d80"/><stop offset="64%" stop-color="#5590b3"/><stop offset="82%" stop-color="#86b5d0"/><stop offset="94%" stop-color="#c4dcea"/><stop offset="100%" stop-color="#7ba5bf"/></radialGradient><radialGradient id="hg_purple" cx="50%" cy="50%" r="50%"><stop offset="0%" stop-color="#0c0f24"/><stop offset="36%" stop-color="#15193a"/><stop offset="50%" stop-color="#363a6e"/><stop offset="66%" stop-color="#6d71a6"/><stop offset="84%" stop-color="#a9acd0"/><stop offset="94%" stop-color="#dcdef0"/><stop offset="100%" stop-color="#8a8eb8"/></radialGradient><radialGradient id="hg_sparkle" cx="50%" cy="50%" r="50%"><stop offset="0%" stop-color="#0a2036"/><stop offset="40%" stop-color="#0e3152"/><stop offset="56%" stop-color="#25608a"/><stop offset="74%" stop-color="#4382aa"/><stop offset="88%" stop-color="#7aaac8"/><stop offset="96%" stop-color="#c8dcea"/><stop offset="100%" stop-color="#6f9ab6"/></radialGradient><filter id="nz" x="0" y="0" width="100%" height="100%"><feTurbulence type="fractalNoise" baseFrequency="0.9" numOctaves="2" seed="3"/><feColorMatrix type="matrix" values="0 0 0 0 0.420  0 0 0 0 0.420  0 0 0 0 0.420  3 0 0 0 -1.950"/></filter><linearGradient id="lsg" x1="0" x2="1"><stop offset="0" stop-color="#18a8b0" stop-opacity="0"/><stop offset="1" stop-color="#1a7f86" stop-opacity=".36"/></linearGradient><radialGradient id="pmg"><stop offset="0" stop-color="#0a3a8a" stop-opacity=".55"/><stop offset="1" stop-color="#001030" stop-opacity="0"/></radialGradient><filter id="bw" x="0" y="0" width="100%" height="100%"><feTurbulence type="fractalNoise" baseFrequency="0.45 0.55" numOctaves="1" seed="11"/><feColorMatrix type="matrix" values="0 0 0 0 1  0 0 0 0 1  0 0 0 0 1  12 0 0 0 -5.300"/></filter><pattern id="gp" width="4" height="4" patternUnits="userSpaceOnUse"><path d="M0 0H4M0 0V4" stroke="#fff" stroke-width="1"/></pattern><radialGradient id="gg1"><stop offset="0" stop-color="#2fae10"/><stop offset="1" stop-color="#0a3a00" stop-opacity="0"/></radialGradient><radialGradient id="gg2"><stop offset="0" stop-color="#c06a08"/><stop offset="1" stop-color="#3a2000" stop-opacity="0"/></radialGradient><mask id="gm"><rect x="13.800" y="0" width="82.500" height="84.600" fill="url(#gp)"/></mask></defs></svg>
<div style="left:752px;top:574.4px;width:110px;height:84.600px;background:#1c1c1c;overflow:hidden;"><svg style="left:0;top:0" width="110" height="84.600" viewBox="0 0 110 84.600"><rect x="13.800" y="0" width="82.500" height="84.600" fill="#000"/></svg></div>
<div style="left:752px;top:659px;width:110px;height:24.8px;background:#383838;border-radius:0 0 3px 3px;overflow:hidden;"></div>
<div style="left:864.5px;top:574.4px;width:110px;height:84.600px;background:#1c1c1c;overflow:hidden;"><svg style="left:0;top:0" width="110" height="84.600" viewBox="0 0 110 84.600"><rect x="13.800" y="0" width="82.500" height="84.600" fill="#000"/><circle cx="55" cy="42.300" r="38.800" fill="#d6ecf2" stroke="#e01818" stroke-width="4.400"/></svg></div>
<div style="left:864.5px;top:659px;width:110px;height:24.8px;background:#383838;border-radius:0 0 3px 3px;overflow:hidden;"></div>
<div style="left:977px;top:574.4px;width:110px;height:84.600px;background:#1c1c1c;overflow:hidden;"><svg style="left:0;top:0" width="110" height="84.600" viewBox="0 0 110 84.600"><rect x="13.800" y="0" width="82.500" height="84.600" fill="#000"/><path d="M15 38.500v7.500h10.500" stroke="#24d000" stroke-width="4" fill="none" filter="url(#gl)" opacity=".9"/><path d="M15 38.500v7.500h10.500" stroke="#5cff2a" stroke-width="1.800" fill="none"/></svg></div>
<div style="left:977px;top:659px;width:110px;height:24.8px;background:#383838;border-radius:0 0 3px 3px;overflow:hidden;"></div>
<div style="top:662.98px;height:18.85px;line-height:18.85px;font-size:14.5px;color:#e0e0e0;white-space:nowrap;left:983.2px;transform:scaleX(0.72);transform-origin:0 50%;">Sabre Green Lines 1</div>
<div style="left:1089.5px;top:574.4px;width:110px;height:84.600px;background:#1c1c1c;overflow:hidden;"><svg style="left:0;top:0" width="110" height="84.600" viewBox="0 0 110 84.600"><rect x="0" y="10.8" width="110" height="63" fill="#071421"/><g clip-path="url(#c169)"><ellipse cx="55" cy="43" rx="51" ry="47" fill="url(#hg_rings)"/><path d="M34 38c0-12 9-20 21-20s21 8 21 20c0 8-3 14-7 20l-5 16H46l-5-16c-4-6-7-12-7-20z" fill="#030c18" opacity=".95"/><g filter="url(#gl05)"><path d="M8 38L30 33M82 35l22-6M10 58l22-4M80 60l24-4M16 74l20-12M30 14l10 8" stroke="#eef6fa" stroke-width="1.6" opacity=".9" fill="none"/><ellipse cx="55" cy="44" rx="41" ry="34" fill="none" stroke="#d8eaf3" stroke-width="1.3" opacity=".75"/><path d="M93 16c6 16 6 36 0 56" stroke="#e8f2f8" stroke-width="1.4" fill="none" opacity=".8"/></g><ellipse cx="58" cy="65" rx="4" ry="1.6" fill="#3aa8e8"/></g></svg></div>
<div style="left:1089.5px;top:659px;width:110px;height:24.8px;background:#383838;border-radius:0 0 3px 3px;overflow:hidden;"></div>
<div style="top:662.98px;height:18.85px;line-height:18.85px;font-size:14.5px;color:#e0e0e0;white-space:nowrap;left:1095.7px;transform:scaleX(0.73);transform-origin:0 50%;">Cybernetic_Symbi...</div>
<div style="left:1202px;top:574.4px;width:110px;height:84.600px;background:#1c1c1c;overflow:hidden;"><svg style="left:0;top:0" width="110" height="84.600" viewBox="0 0 110 84.600"><rect x="0" y="10.8" width="110" height="63" fill="#15143a"/><g clip-path="url(#c169)"><ellipse cx="55" cy="43" rx="51" ry="47" fill="url(#hg_purple)"/><path d="M36 40c0-12 8-19 20-19s20 7 20 19c0 8-3 14-7 20l-4 14H47l-4-14c-4-6-7-12-7-20z" fill="#0e1230" opacity=".9"/><path d="M42 40c0-9 6-14 14-14s14 5 14 14c0 10-6 22-14 22s-14-12-14-22z" fill="#2a2e5e" opacity=".85"/><circle cx="48" cy="41" r="1.5" fill="#5a3df0"/><circle cx="70" cy="40" r="1.5" fill="#6a4df0"/><g filter="url(#gl1)"><circle cx="29" cy="20" r="3.5" fill="#fff" opacity=".7"/><circle cx="72" cy="16" r="5" fill="#5a2df0" opacity=".75"/><circle cx="40" cy="68" r="2" fill="#fff" opacity=".7"/></g><path d="M6 54H104" stroke="#e4e6f6" stroke-width=".8" opacity=".6"/></g></svg></div>
<div style="left:1202px;top:659px;width:110px;height:24.8px;background:#383838;border-radius:0 0 3px 3px;overflow:hidden;"></div>
<div style="top:662.98px;height:18.85px;line-height:18.85px;font-size:14.5px;color:#e0e0e0;white-space:nowrap;left:1208.2px;transform:scaleX(0.73);transform-origin:0 50%;">Cybernetic_Symbi...</div>
<div style="left:1314.5px;top:574.4px;width:110px;height:84.600px;background:#1c1c1c;overflow:hidden;"><svg style="left:0;top:0" width="110" height="84.600" viewBox="0 0 110 84.600"><rect x="0" y="10.8" width="110" height="63" fill="#061522"/><g clip-path="url(#c169)"><ellipse cx="55" cy="43" rx="51" ry="47" fill="url(#hg_sparkle)"/><path d="M36 38c0-12 8-20 19-20s19 8 19 20c0 8-3 14-6 20l-4 16H46l-4-16c-3-6-6-12-6-20z" fill="#0a2744" opacity=".9"/><path d="M41 40c0-9 6-15 14-15s14 6 14 15c0 10-6 24-14 24s-14-14-14-24z" fill="#0b2a48" opacity=".85"/><g filter="url(#gl1)"><circle cx="36" cy="16" r="4.2" fill="#fff" opacity=".85"/><circle cx="22" cy="25" r="3.6" fill="#fff" opacity=".85"/><circle cx="15" cy="43" r="3.2" fill="#fff" opacity=".85"/><circle cx="22" cy="62" r="3.6" fill="#fff" opacity=".85"/><circle cx="84" cy="20" r="4.2" fill="#fff" opacity=".85"/><circle cx="97" cy="52" r="4.2" fill="#fff" opacity=".85"/><circle cx="91" cy="66" r="3.6" fill="#fff" opacity=".85"/><circle cx="74" cy="70" r="2.6" fill="#fff" opacity=".85"/><circle cx="34" cy="70" r="2.6" fill="#fff" opacity=".85"/><circle cx="66" cy="16" r="2.4" fill="#fff" opacity=".85"/></g><circle cx="64" cy="67" r="1.8" fill="#25c6e8"/></g></svg></div>
<div style="left:1314.5px;top:659px;width:110px;height:24.8px;background:#383838;border-radius:0 0 3px 3px;overflow:hidden;"></div>
<div style="top:662.98px;height:18.85px;line-height:18.85px;font-size:14.5px;color:#e0e0e0;white-space:nowrap;left:1320.7px;transform:scaleX(0.73);transform-origin:0 50%;">Cybernetic_Symbi...</div>
<div style="left:1427px;top:574.4px;width:110px;height:84.600px;background:#1c1c1c;overflow:hidden;"><svg style="left:0;top:0" width="110" height="84.600" viewBox="0 0 110 84.600"><rect x="0" y="10.800" width="110" height="63.200" fill="#000"/><g filter="url(#gl05)"><rect x="5" y="15" width="3.4" height="11.9" fill="#fff" opacity=".8"/><rect x="34" y="15" width="1.7" height="5.1" fill="#9db" opacity=".8"/><rect x="47" y="14" width="2.55" height="5.95" fill="#cde" opacity=".8"/><rect x="86" y="24" width="5.95" height="6.8" fill="#f4ffff" opacity=".8"/><rect x="66" y="30" width="4.25" height="6.8" fill="#e8f4ff" opacity=".8"/><rect x="75" y="30" width="1.7" height="6.8" fill="#e8c9a0" opacity=".8"/><rect x="79" y="30" width="1.7" height="6.8" fill="#e8d0b0" opacity=".8"/><rect x="26" y="41" width="1.7" height="8.5" fill="#9cc8ff" opacity=".8"/><rect x="61" y="47" width="4.25" height="1.7" fill="#fff" opacity=".8"/><rect x="62" y="50" width="3.4" height="4.25" fill="#5870b8" opacity=".8"/><rect x="52" y="51" width="5.1" height="3.4" fill="#fff" opacity=".8"/><rect x="100" y="43" width="2.55" height="4.25" fill="#f0b090" opacity=".8"/><rect x="100" y="36" width="1.7" height="5.95" fill="#446" opacity=".8"/><rect x="86" y="54" width="1.7" height="7.6499999999999995" fill="#d8c8b8" opacity=".8"/><rect x="45" y="63" width="4.25" height="1.7" fill="#f0d8c0" opacity=".8"/><rect x="42" y="68" width="4.25" height="1.7" fill="#fff" opacity=".8"/><rect x="63" y="62" width="1.275" height="2.55" fill="#cc4" opacity=".8"/><rect x="74" y="50" width="1.7" height="2.55" fill="#d54" opacity=".8"/><rect x="6" y="46" width="3.4" height="2.55" fill="#48a" opacity=".8"/><rect x="12" y="50" width="34.0" height="1.275" fill="#357" opacity=".8"/><rect x="24" y="17" width="5.1" height="1.275" fill="#268" opacity=".8"/><rect x="95" y="15" width="8.5" height="1.275" fill="#268" opacity=".8"/><rect x="26" y="25" width="1.7" height="2.55" fill="#ccc" opacity=".8"/><rect x="78" y="45" width="1.7" height="2.55" fill="#28a" opacity=".8"/></g></svg></div>
<div style="left:1427px;top:659px;width:110px;height:24.8px;background:#383838;border-radius:0 0 3px 3px;overflow:hidden;"></div>
<div style="top:662.98px;height:18.85px;line-height:18.85px;font-size:14.5px;color:#e0e0e0;white-space:nowrap;left:1433.2px;transform:scaleX(0.87);transform-origin:0 50%;">GAF_01</div>
<div style="left:1539.5px;top:574.4px;width:102.3px;height:84.600px;background:#1c1c1c;overflow:hidden;"><svg style="left:0;top:0" width="110" height="84.600" viewBox="0 0 110 84.600"><rect x="0" y="10.800" width="110" height="63.200" fill="#101010"/><rect x="0" y="10.800" width="110" height="63.200" fill="#141414"/><rect x="0" y="10.800" width="110" height="63.200" filter="url(#nz)"/><path d="M10 74c10-20 30-25 45-8" stroke="#2c2c2c" stroke-width="6" fill="none" opacity=".7"/></svg></div>
<div style="left:1539.5px;top:659px;width:102.3px;height:24.8px;background:#383838;border-radius:0 0 3px 3px;overflow:hidden;"></div>
<div style="top:662.98px;height:18.85px;line-height:18.85px;font-size:14.5px;color:#e0e0e0;white-space:nowrap;left:1545.7px;transform:scaleX(0.88);transform-origin:0 50%;">AF Cube Minimal</div>
<div style="left:752px;top:688.15px;width:110px;height:84.600px;background:#1c1c1c;overflow:hidden;"><svg style="left:0;top:0" width="110" height="84.600" viewBox="0 0 110 84.600"><rect x="13.800" y="0" width="82.500" height="84.600" fill="#000"/></svg></div>
<div style="left:752px;top:772.75px;width:110px;height:24.8px;background:#383838;border-radius:0 0 3px 3px;overflow:hidden;"></div>
<div style="left:864.5px;top:688.15px;width:110px;height:84.600px;background:#1c1c1c;overflow:hidden;"><svg style="left:0;top:0" width="110" height="84.600" viewBox="0 0 110 84.600"><rect x="96.300" y="0" width="13.700" height="84.600" fill="#1c1c1c"/><rect x="13.800" y="0" width="90" height="84.600" fill="#000"/><rect x="88" y="0" width="8.300" height="84.600" fill="#000"/><path d="M90.500 33v22" stroke="#e0408a" stroke-width="2.200"/><path d="M90.500 34v20" stroke="#ffc0dc" stroke-width=".8"/></svg></div>
<div style="left:864.5px;top:772.75px;width:110px;height:24.8px;background:#383838;border-radius:0 0 3px 3px;overflow:hidden;"></div>
<div style="left:977px;top:688.15px;width:110px;height:84.600px;background:#1c1c1c;overflow:hidden;"><svg style="left:0;top:0" width="110" height="84.600" viewBox="0 0 110 84.600"><rect x="13.800" y="0" width="82.500" height="84.600" fill="#000"/></svg></div>
<div style="left:977px;top:772.75px;width:110px;height:24.8px;background:#383838;border-radius:0 0 3px 3px;overflow:hidden;"></div>
<div style="top:776.73px;height:18.85px;line-height:18.85px;font-size:14.5px;color:#e0e0e0;white-space:nowrap;left:983.2px;transform:scaleX(0.99);transform-origin:0 50%;">Chevrons_2</div>
<div style="left:1089.5px;top:688.15px;width:110px;height:84.600px;background:#1c1c1c;overflow:hidden;"><svg style="left:0;top:0" width="110" height="84.600" viewBox="0 0 110 84.600"><rect x="0" y="10.8" width="110" height="63" fill="#061522"/><g clip-path="url(#c169)"><ellipse cx="55" cy="43" rx="51" ry="47" fill="url(#hg_sparkle)"/><path d="M36 38c0-12 8-20 19-20s19 8 19 20c0 8-3 14-6 20l-4 16H46l-4-16c-3-6-6-12-6-20z" fill="#0a2744" opacity=".9"/><path d="M41 40c0-9 6-15 14-15s14 6 14 15c0 10-6 24-14 24s-14-14-14-24z" fill="#0b2a48" opacity=".85"/><g filter="url(#gl1)"><circle cx="36" cy="16" r="4.2" fill="#fff" opacity=".85"/><circle cx="22" cy="25" r="3.6" fill="#fff" opacity=".85"/><circle cx="15" cy="43" r="3.2" fill="#fff" opacity=".85"/><circle cx="22" cy="62" r="3.6" fill="#fff" opacity=".85"/><circle cx="84" cy="20" r="4.2" fill="#fff" opacity=".85"/><circle cx="97" cy="52" r="4.2" fill="#fff" opacity=".85"/><circle cx="91" cy="66" r="3.6" fill="#fff" opacity=".85"/><circle cx="74" cy="70" r="2.6" fill="#fff" opacity=".85"/><circle cx="34" cy="70" r="2.6" fill="#fff" opacity=".85"/><circle cx="66" cy="16" r="2.4" fill="#fff" opacity=".85"/></g><circle cx="64" cy="67" r="1.8" fill="#25c6e8"/></g></svg></div>
<div style="left:1089.5px;top:772.75px;width:110px;height:24.8px;background:#383838;border-radius:0 0 3px 3px;overflow:hidden;"></div>
<div style="top:776.73px;height:18.85px;line-height:18.85px;font-size:14.5px;color:#e0e0e0;white-space:nowrap;left:1095.7px;transform:scaleX(0.73);transform-origin:0 50%;">Cybernetic_Symbi...</div>
<div style="left:1202px;top:688.15px;width:110px;height:84.600px;background:#1c1c1c;overflow:hidden;"><svg style="left:0;top:0" width="110" height="84.600" viewBox="0 0 110 84.600"><rect x="13.800" y="0" width="82.500" height="84.600" fill="#000"/><path d="M16 54l5-22 6 20" stroke="#5c5c5c" stroke-width="3.200" fill="none" opacity="0.4"/><path d="M27 54l5-22 6 20" stroke="#5c5c5c" stroke-width="3.200" fill="none" opacity="0.6400000000000001"/><path d="M38 54l5-22 6 20" stroke="#5c5c5c" stroke-width="3.200" fill="none" opacity="0.44000000000000006"/><path d="M49 54l5-22 6 20" stroke="#5c5c5c" stroke-width="3.200" fill="none" opacity="0.7200000000000001"/><path d="M60 54l5-22 6 20" stroke="#5c5c5c" stroke-width="3.200" fill="none" opacity="0.7200000000000001"/><path d="M71 54l5-22 6 20" stroke="#5c5c5c" stroke-width="3.200" fill="none" opacity="0.5599999999999999"/><path d="M82 54l5-22 6 20" stroke="#5c5c5c" stroke-width="3.200" fill="none" opacity="0.27999999999999997"/></svg></div>
<div style="left:1202px;top:772.75px;width:110px;height:24.8px;background:#383838;border-radius:0 0 3px 3px;overflow:hidden;"></div>
<div style="top:776.73px;height:18.85px;line-height:18.85px;font-size:14.5px;color:#e0e0e0;white-space:nowrap;left:1208.2px;transform:scaleX(0.72);transform-origin:0 50%;">Remix Chevron_2...</div>
<div style="left:1314.5px;top:688.15px;width:110px;height:84.600px;background:#1c1c1c;overflow:hidden;"><svg style="left:0;top:0" width="110" height="84.600" viewBox="0 0 110 84.600"><rect x="32.700" y="20" width="44.500" height="44.500" fill="#000"/></svg></div>
<div style="left:1314.5px;top:772.75px;width:110px;height:24.8px;background:#383838;border-radius:0 0 3px 3px;overflow:hidden;"></div>
<div style="top:776.73px;height:18.85px;line-height:18.85px;font-size:14.5px;color:#e0e0e0;white-space:nowrap;left:1320.7px;transform:scaleX(0.95);transform-origin:0 50%;">AF Grey</div>
<div style="left:1427px;top:688.15px;width:110px;height:84.600px;background:#1c1c1c;overflow:hidden;"><svg style="left:0;top:0" width="110" height="84.600" viewBox="0 0 110 84.600"><path d="M80 42.300L110 0V84.600Z" fill="url(#lsg)"/><path d="M0 42.300H68" stroke="#19c6cc" stroke-width="2.400"/><path d="M80 42.300H110" stroke="#19c6cc" stroke-width="2.400"/><path d="M60 42.300h10" stroke="#19c6cc" stroke-width="2.400" opacity=".4"/></svg></div>
<div style="left:1427px;top:772.75px;width:110px;height:24.8px;background:#383838;border-radius:0 0 3px 3px;overflow:hidden;"></div>
<div style="top:776.73px;height:18.85px;line-height:18.85px;font-size:14.5px;color:#e0e0e0;white-space:nowrap;left:1433.2px;transform:scaleX(0.97);transform-origin:0 50%;">Line Scape</div>
<div style="left:1539.5px;top:688.15px;width:102.3px;height:84.600px;background:#1c1c1c;overflow:hidden;"><svg style="left:0;top:0" width="110" height="84.600" viewBox="0 0 110 84.600"><rect x="32.700" y="20" width="44.500" height="44.500" fill="#000"/></svg></div>
<div style="left:1539.5px;top:772.75px;width:102.3px;height:24.8px;background:#383838;border-radius:0 0 3px 3px;overflow:hidden;"></div>
<div style="top:776.73px;height:18.85px;line-height:18.85px;font-size:14.5px;color:#e0e0e0;white-space:nowrap;left:1545.7px;transform:scaleX(0.99);transform-origin:0 50%;">AF Col Bloom</div>
<div style="left:752px;top:801.9px;width:110px;height:84.600px;background:#1c1c1c;overflow:hidden;"><svg style="left:0;top:0" width="110" height="84.600" viewBox="0 0 110 84.600"><rect x="13.800" y="0" width="82.500" height="84.600" fill="#000"/></svg></div>
<div style="left:752px;top:886.5px;width:110px;height:24.8px;background:#383838;border-radius:0 0 3px 3px;overflow:hidden;"></div>
<div style="left:864.5px;top:801.9px;width:110px;height:84.600px;background:#1c1c1c;overflow:hidden;"><svg style="left:0;top:0" width="110" height="84.600" viewBox="0 0 110 84.600"><rect x="13.800" y="0" width="82.500" height="84.600" fill="#000"/></svg></div>
<div style="left:864.5px;top:886.5px;width:110px;height:24.8px;background:#383838;border-radius:0 0 3px 3px;overflow:hidden;"></div>
<div style="left:977px;top:801.9px;width:110px;height:84.600px;background:#1c1c1c;overflow:hidden;"><svg style="left:0;top:0" width="110" height="84.600" viewBox="0 0 110 84.600"><rect x="13.800" y="0" width="82.500" height="84.600" fill="#000"/><path d="M15 38.500v7.500h10.500" stroke="#24d000" stroke-width="4" fill="none" filter="url(#gl)" opacity=".9"/><path d="M15 38.500v7.500h10.500" stroke="#5cff2a" stroke-width="1.800" fill="none"/></svg></div>
<div style="left:977px;top:886.5px;width:110px;height:24.8px;background:#383838;border-radius:0 0 3px 3px;overflow:hidden;"></div>
<div style="top:890.48px;height:18.85px;line-height:18.85px;font-size:14.5px;color:#e0e0e0;white-space:nowrap;left:983.2px;transform:scaleX(0.72);transform-origin:0 50%;">Sabre Green Lines 1</div>
<div style="left:1089.5px;top:801.9px;width:110px;height:84.600px;background:#1c1c1c;overflow:hidden;"><svg style="left:0;top:0" width="110" height="84.600" viewBox="0 0 110 84.600"><rect x="0" y="10.800" width="110" height="63.200" fill="#1c1c1c"/><rect x="1" y="26" width="108" height="33" fill="#000" stroke="#0e5a0e" stroke-width="1.200" stroke-dasharray="1 2"/><rect x="0" y="10.800" width="110" height="14.500" fill="#1c1c1c"/><rect x="0" y="59.500" width="110" height="15" fill="#1c1c1c"/><rect x="0" y="25.300" width="110" height="34.500" fill="#020a02"/><path d="M1.500 27v31M108.500 27v31" stroke="#0f6a0f" stroke-width="1.200" stroke-dasharray="1.500 2"/></svg></div>
<div style="left:1089.5px;top:886.5px;width:110px;height:24.8px;background:#383838;border-radius:0 0 3px 3px;overflow:hidden;"></div>
<div style="top:890.48px;height:18.85px;line-height:18.85px;font-size:14.5px;color:#e0e0e0;white-space:nowrap;left:1095.7px;letter-spacing:0.08px;">UW-CircleIn</div>
<div style="left:1202px;top:801.9px;width:110px;height:84.600px;background:#1c1c1c;overflow:hidden;"><svg style="left:0;top:0" width="110" height="84.600" viewBox="0 0 110 84.600"><rect x="13.800" y="0" width="82.500" height="84.600" fill="#000"/></svg></div>
<div style="left:1202px;top:886.5px;width:110px;height:24.8px;background:#383838;border-radius:0 0 3px 3px;overflow:hidden;"></div>
<div style="top:890.48px;height:18.85px;line-height:18.85px;font-size:14.5px;color:#e0e0e0;white-space:nowrap;left:1208.2px;transform:scaleX(0.74);transform-origin:0 50%;">Sabre Twin Hex 0...</div>
<div style="left:1314.5px;top:801.9px;width:110px;height:84.600px;background:#1c1c1c;overflow:hidden;"><svg style="left:0;top:0" width="110" height="84.600" viewBox="0 0 110 84.600"><rect x="13.800" y="0" width="82.500" height="84.600" fill="#000"/><path d="M63 14h24" stroke="#1468e8" stroke-width="3.500" filter="url(#gl1)"/><path d="M64 14h22" stroke="#4aa0ff" stroke-width="1.400"/><path d="M84 42h11" stroke="#1468e8" stroke-width="3.500" filter="url(#gl1)"/><path d="M85 42h10" stroke="#4aa0ff" stroke-width="1.400"/></svg></div>
<div style="left:1314.5px;top:886.5px;width:110px;height:24.8px;background:#383838;border-radius:0 0 3px 3px;overflow:hidden;"></div>
<div style="top:890.48px;height:18.85px;line-height:18.85px;font-size:14.5px;color:#e0e0e0;white-space:nowrap;left:1320.7px;transform:scaleX(0.74);transform-origin:0 50%;">Pulse Phase Layer1</div>
<div style="left:1427px;top:801.9px;width:110px;height:84.600px;background:#1c1c1c;overflow:hidden;"><svg style="left:0;top:0" width="110" height="84.600" viewBox="0 0 110 84.600"><rect x="13.800" y="0" width="82.500" height="84.600" fill="#000"/><clipPath id="c43"><rect x="13.800" y="0" width="82.500" height="84.600"/></clipPath><g clip-path="url(#c43)"><ellipse cx="15.500" cy="42" rx="7" ry="11" fill="#c80e5c" filter="url(#gl3)"/><ellipse cx="15" cy="42" rx="3" ry="6" fill="#ff2a80" filter="url(#gl1)"/><ellipse cx="14.800" cy="41.500" rx="1.200" ry="4" fill="#ffd0e4"/></g></svg></div>
<div style="left:1427px;top:886.5px;width:110px;height:24.8px;background:#383838;border-radius:0 0 3px 3px;overflow:hidden;"></div>
<div style="top:890.48px;height:18.85px;line-height:18.85px;font-size:14.5px;color:#e0e0e0;white-space:nowrap;left:1433.2px;transform:scaleX(0.74);transform-origin:0 50%;">Pulse Heartbeat ...</div>
<div style="left:1539.5px;top:801.9px;width:102.3px;height:84.600px;background:#1c1c1c;overflow:hidden;"><svg style="left:0;top:0" width="110" height="84.600" viewBox="0 0 110 84.600"><rect x="0" y="0" width="110" height="84.600" fill="#1e1e1e"/><rect x="1" y="21" width="10" height="1.600" fill="#cfcfcf" opacity=".75"/><rect x="30" y="23" width="2" height="1.600" fill="#cfcfcf" opacity=".75"/><rect x="80" y="28" width="8" height="1.600" fill="#cfcfcf" opacity=".75"/><rect x="80" y="52" width="8" height="1.600" fill="#cfcfcf" opacity=".75"/><rect x="2" y="61" width="12" height="1.600" fill="#cfcfcf" opacity=".75"/><rect x="78" y="58" width="3" height="1.600" fill="#cfcfcf" opacity=".75"/><rect x="96" y="70" width="3" height="1.600" fill="#cfcfcf" opacity=".75"/><rect x="12" y="11" width="3" height="1.600" fill="#cfcfcf" opacity=".75"/></svg></div>
<div style="left:1539.5px;top:886.5px;width:102.3px;height:24.8px;background:#383838;border-radius:0 0 3px 3px;overflow:hidden;"></div>
<div style="top:890.48px;height:18.85px;line-height:18.85px;font-size:14.5px;color:#e0e0e0;white-space:nowrap;left:1545.7px;letter-spacing:0.03px;">Big Hex</div>
<div style="left:752px;top:915.65px;width:110px;height:84.600px;background:#1c1c1c;overflow:hidden;"><svg style="left:0;top:0" width="110" height="84.600" viewBox="0 0 110 84.600"><rect x="13.800" y="0" width="82.500" height="84.600" fill="#000"/></svg></div>
<div style="left:752px;top:1000.25px;width:110px;height:24.8px;background:#383838;border-radius:0 0 3px 3px;overflow:hidden;"></div>
<div style="left:864.5px;top:915.65px;width:110px;height:84.600px;background:#1c1c1c;overflow:hidden;"><svg style="left:0;top:0" width="110" height="84.600" viewBox="0 0 110 84.600"><rect x="13.800" y="0" width="82.500" height="84.600" fill="#000"/><circle cx="55" cy="42.300" r="38.800" fill="#d6ecf2" stroke="#e01818" stroke-width="4.400"/></svg></div>
<div style="left:864.5px;top:1000.25px;width:110px;height:24.8px;background:#383838;border-radius:0 0 3px 3px;overflow:hidden;"></div>
<div style="left:977px;top:915.65px;width:110px;height:84.600px;background:#1c1c1c;overflow:hidden;"><svg style="left:0;top:0" width="110" height="84.600" viewBox="0 0 110 84.600"><rect x="13.800" y="0" width="82.500" height="84.600" fill="#000"/><path d="M28 30h17" stroke="#24d000" stroke-width="5" fill="none" filter="url(#gl)" opacity=".9"/><path d="M29 30h15" stroke="#5cff2a" stroke-width="1.600" fill="none"/></svg></div>
<div style="left:977px;top:1000.25px;width:110px;height:24.8px;background:#383838;border-radius:0 0 3px 3px;overflow:hidden;"></div>
<div style="top:1004.23px;height:18.85px;line-height:18.85px;font-size:14.5px;color:#e0e0e0;white-space:nowrap;left:983.2px;transform:scaleX(0.73);transform-origin:0 50%;">Sabre Green Lines 2</div>
<div style="left:1089.5px;top:915.65px;width:110px;height:84.600px;background:#1c1c1c;overflow:hidden;"><svg style="left:0;top:0" width="110" height="84.600" viewBox="0 0 110 84.600"><rect x="0" y="0" width="110" height="84.600" fill="#1c1c1c"/><rect x="0" y="24.500" width="110" height="35" fill="#000"/></svg></div>
<div style="left:1089.5px;top:1000.25px;width:110px;height:24.8px;background:#383838;border-radius:0 0 3px 3px;overflow:hidden;"></div>
<div style="top:1004.23px;height:18.85px;line-height:18.85px;font-size:14.5px;color:#e0e0e0;white-space:nowrap;left:1095.7px;transform:scaleX(0.83);transform-origin:0 50%;">UW-HorLineDown</div>
<div style="left:1202px;top:915.65px;width:110px;height:84.600px;background:#1c1c1c;overflow:hidden;"><svg style="left:0;top:0" width="110" height="84.600" viewBox="0 0 110 84.600"><rect x="13.800" y="0" width="82.500" height="84.600" fill="#000"/><ellipse cx="50" cy="48" rx="34" ry="34" fill="url(#pmg)"/><ellipse cx="90" cy="30" rx="10" ry="18" fill="url(#pmg)"/><path d="M34 24l18 4" stroke="#1a6cf0" stroke-width="1.800" stroke-dasharray="1.500 1"/><path d="M56 39l-13 9" stroke="#1a6cf0" stroke-width="1.800" stroke-dasharray="1.500 1"/><path d="M21 45l20 9" stroke="#1a6cf0" stroke-width="1.800" stroke-dasharray="1.500 1"/><path d="M59 49l-11 17" stroke="#1a6cf0" stroke-width="1.800" stroke-dasharray="1.500 1"/><path d="M92 18l-4 20" stroke="#1a6cf0" stroke-width="1.800" stroke-dasharray="1.500 1"/></svg></div>
<div style="left:1202px;top:1000.25px;width:110px;height:24.8px;background:#383838;border-radius:0 0 3px 3px;overflow:hidden;"></div>
<div style="top:1004.23px;height:18.85px;line-height:18.85px;font-size:14.5px;color:#e0e0e0;white-space:nowrap;left:1208.2px;transform:scaleX(0.76);transform-origin:0 50%;">Pulse Move 2_2203</div>
<div style="left:1314.5px;top:915.65px;width:110px;height:84.600px;background:#1c1c1c;overflow:hidden;"><svg style="left:0;top:0" width="110" height="84.600" viewBox="0 0 110 84.600"><rect x="13.800" y="0" width="82.500" height="84.600" fill="#000"/></svg></div>
<div style="left:1314.5px;top:1000.25px;width:110px;height:24.8px;background:#383838;border-radius:0 0 3px 3px;overflow:hidden;"></div>
<div style="top:1004.23px;height:18.85px;line-height:18.85px;font-size:14.5px;color:#e0e0e0;white-space:nowrap;left:1320.7px;transform:scaleX(0.72);transform-origin:0 50%;">Sabre Spin Circle ...</div>
<div style="left:1427px;top:915.65px;width:110px;height:84.600px;background:#1c1c1c;overflow:hidden;"><svg style="left:0;top:0" width="110" height="84.600" viewBox="0 0 110 84.600"><circle cx="55" cy="42.3" r="41" fill="#646464"/><circle cx="55" cy="42.3" r="36.6" fill="#7f7f7f" stroke="#b4b4b4" stroke-width="2.5"/><path d="M48 17C40 18 28 24 28.500 33C29 41.500 42 43 44.500 34C45.500 29 43.500 23 48 17Z" fill="#a9a9a9"/></svg></div>
<div style="left:1427px;top:1000.25px;width:110px;height:24.8px;background:#383838;border-radius:0 0 3px 3px;overflow:hidden;"></div>
<div style="top:1004.23px;height:18.85px;line-height:18.85px;font-size:14.5px;color:#e0e0e0;white-space:nowrap;left:1433.2px;letter-spacing:0.06px;">TouchCamL</div>
<div style="left:1539.5px;top:915.65px;width:102.3px;height:84.600px;background:#1c1c1c;overflow:hidden;"><svg style="left:0;top:0" width="110" height="84.600" viewBox="0 0 110 84.600"><circle cx="55" cy="42.3" r="41" fill="#646464"/><circle cx="55" cy="42.3" r="36.6" fill="#7f7f7f" stroke="#b4b4b4" stroke-width="2.5"/><path d="M48 17C40 18 28 24 28.500 33C29 41.500 42 43 44.500 34C45.500 29 43.500 23 48 17Z" fill="#a9a9a9"/></svg></div>
<div style="left:1539.5px;top:1000.25px;width:102.3px;height:24.8px;background:#383838;border-radius:0 0 3px 3px;overflow:hidden;"></div>
<div style="top:1004.23px;height:18.85px;line-height:18.85px;font-size:14.5px;color:#e0e0e0;white-space:nowrap;left:1545.7px;letter-spacing:0.09px;">TouchCamR</div>
<div style="left:752px;top:1029.4px;width:110px;height:84.600px;background:#1c1c1c;overflow:hidden;"><svg style="left:0;top:0" width="110" height="84.600" viewBox="0 0 110 84.600"><circle cx="55" cy="42.3" r="41" fill="#646464"/><circle cx="55" cy="42.3" r="36.6" fill="#7f7f7f" stroke="#b4b4b4" stroke-width="2.5"/><path d="M48 17C40 18 28 24 28.500 33C29 41.500 42 43 44.500 34C45.500 29 43.500 23 48 17Z" fill="#a9a9a9"/></svg></div>
<div style="left:752px;top:1114px;width:110px;height:24.8px;background:#80ffd4;border-radius:0 0 3px 3px;overflow:hidden;"></div>
<div style="top:1117.98px;height:18.85px;line-height:18.85px;font-size:14.5px;color:#123c2f;white-space:nowrap;left:758.2px;letter-spacing:0.3px;">TouchOutL</div>
<div style="left:864.5px;top:1029.4px;width:110px;height:84.600px;background:#1c1c1c;overflow:hidden;"><svg style="left:0;top:0" width="110" height="84.600" viewBox="0 0 110 84.600"><rect x="13.800" y="0" width="82.500" height="84.600" fill="#000"/><circle cx="55" cy="42.300" r="38.800" fill="#d6ecf2" stroke="#e01818" stroke-width="4.400"/></svg></div>
<div style="left:864.5px;top:1114px;width:110px;height:24.8px;background:#383838;border-radius:0 0 3px 3px;overflow:hidden;"></div>
<div style="top:1117.98px;height:18.85px;line-height:18.85px;font-size:14.5px;color:#e0e0e0;white-space:nowrap;left:870.7px;letter-spacing:0.2px;">TouchOutR</div>
<div style="left:977px;top:1029.4px;width:110px;height:84.600px;background:#1c1c1c;overflow:hidden;"><svg style="left:0;top:0" width="110" height="84.600" viewBox="0 0 110 84.600"><rect x="0" y="10.800" width="110" height="63.200" fill="#000"/><path d="M55 42l21-21M78 42l11 10" stroke="#ff2a8a" stroke-width="3" filter="url(#gl1)" opacity=".7"/><path d="M55 42l21-21M78 42l11 10" stroke="#ff4a9a" stroke-width="1.100"/></svg></div>
<div style="left:977px;top:1114px;width:110px;height:24.8px;background:#383838;border-radius:0 0 3px 3px;overflow:hidden;"></div>
<div style="top:1117.98px;height:18.85px;line-height:18.85px;font-size:14.5px;color:#e0e0e0;white-space:nowrap;left:983.2px;letter-spacing:0.12px;">SabreAngle</div>
<div style="left:1089.5px;top:1029.4px;width:110px;height:84.600px;background:#1c1c1c;overflow:hidden;"><svg style="left:0;top:0" width="110" height="84.600" viewBox="0 0 110 84.600"><rect x="13.800" y="0" width="82.500" height="84.600" fill="#000"/><path d="M20 36h18v1.500h-6v3.500a3 3 0 0 1 0 4v3.500h6V50H20v-1.500h6V45a3 3 0 0 1 0-4v-3.500h-6z" fill="#fff"/><path d="M71 36h18v1.500h-6v3.500a3 3 0 0 1 0 4v3.500h6V50H71v-1.500h6V45a3 3 0 0 1 0-4v-3.500h-6z" fill="#fff"/><rect x="52.500" y="60" width="5" height="24.600" fill="#fff"/></svg></div>
<div style="left:1089.5px;top:1114px;width:110px;height:24.8px;background:#383838;border-radius:0 0 3px 3px;overflow:hidden;"></div>
<div style="top:1117.98px;height:18.85px;line-height:18.85px;font-size:14.5px;color:#e0e0e0;white-space:nowrap;left:1095.7px;transform:scaleX(0.75);transform-origin:0 50%;">Mirrored Rectangl...</div>
<div style="left:1202px;top:1029.4px;width:110px;height:84.600px;background:#1c1c1c;overflow:hidden;"><svg style="left:0;top:0" width="110" height="84.600" viewBox="0 0 110 84.600"><rect x="13.800" y="0" width="82.500" height="84.600" fill="#000"/><rect x="13.800" y="0" width="82.500" height="84.600" filter="url(#bw)"/><rect x="13.800" y="36" width="82.500" height="9" fill="#000" opacity=".6"/></svg></div>
<div style="left:1202px;top:1114px;width:110px;height:24.8px;background:#383838;border-radius:0 0 3px 3px;overflow:hidden;"></div>
<div style="top:1117.98px;height:18.85px;line-height:18.85px;font-size:14.5px;color:#e0e0e0;white-space:nowrap;left:1208.2px;transform:scaleX(0.71);transform-origin:0 50%;">Space Invader Rec...</div>
<div style="left:1314.5px;top:1029.4px;width:110px;height:84.600px;background:#1c1c1c;overflow:hidden;"><svg style="left:0;top:0" width="110" height="84.600" viewBox="0 0 110 84.600"><rect x="13.800" y="0" width="82.500" height="84.600" fill="#000"/><g mask="url(#gm)"><rect x="13.800" y="0" width="82.500" height="84.600" fill="#0c2a06"/><circle cx="32" cy="60" r="26" fill="url(#gg1)"/><circle cx="80" cy="42" r="26" fill="url(#gg2)"/></g></svg></div>
<div style="left:1314.5px;top:1114px;width:110px;height:24.8px;background:#383838;border-radius:0 0 3px 3px;overflow:hidden;"></div>
<div style="top:1117.98px;height:18.85px;line-height:18.85px;font-size:14.5px;color:#e0e0e0;white-space:nowrap;left:1320.7px;transform:scaleX(0.88);transform-origin:0 50%;">GridColour_2203</div>
<div style="left:1427px;top:1029.4px;width:110px;height:84.600px;background:#1c1c1c;overflow:hidden;"><svg style="left:0;top:0" width="110" height="84.600" viewBox="0 0 110 84.600"><circle cx="55" cy="42.3" r="41" fill="#646464"/><circle cx="55" cy="42.3" r="36.6" fill="#7f7f7f" stroke="#b4b4b4" stroke-width="2.5"/><path d="M48 17C40 18 28 24 28.500 33C29 41.500 42 43 44.500 34C45.500 29 43.500 23 48 17Z" fill="#a9a9a9"/></svg></div>
<div style="left:1427px;top:1114px;width:110px;height:24.8px;background:#383838;border-radius:0 0 3px 3px;overflow:hidden;"></div>
<div style="top:1117.98px;height:18.85px;line-height:18.85px;font-size:14.5px;color:#e0e0e0;white-space:nowrap;left:1433.2px;letter-spacing:0.06px;">TouchCamL</div>
<div style="left:1539.5px;top:1029.4px;width:102.3px;height:84.600px;background:#1c1c1c;overflow:hidden;"><svg style="left:0;top:0" width="110" height="84.600" viewBox="0 0 110 84.600"><circle cx="55" cy="42.3" r="41" fill="#646464"/><circle cx="55" cy="42.3" r="36.6" fill="#7f7f7f" stroke="#b4b4b4" stroke-width="2.5"/><path d="M48 17C40 18 28 24 28.500 33C29 41.500 42 43 44.500 34C45.500 29 43.500 23 48 17Z" fill="#a9a9a9"/></svg></div>
<div style="left:1539.5px;top:1114px;width:102.3px;height:24.8px;background:#383838;border-radius:0 0 3px 3px;overflow:hidden;"></div>
<div style="top:1117.98px;height:18.85px;line-height:18.85px;font-size:14.5px;color:#e0e0e0;white-space:nowrap;left:1545.7px;letter-spacing:0.09px;">TouchCamR</div>
<div style="top:889.58px;height:18.85px;line-height:18.85px;font-size:14.5px;color:#e0e0e0;white-space:nowrap;left:966px;">...</div>
<div style="left:1641.7px;top:545px;width:4.1px;height:614px;background:#000;"></div>
<div style="left:752px;top:1145px;width:890.3px;height:14px;background:#1c1c1c;"></div>
<div style="left:752px;top:1145px;width:639.7px;height:14px;background:#323232;"></div>
<div style="left:364.2px;top:1165.3px;width:38.9px;height:24.6px;background:#373737;border-radius:4px;"></div>
<svg style="left:369.9px;top:1173px;" width="10" height="10" viewBox="0 0 10 10"><rect x="0" y="0" width="2.700" height="9.800" fill="#ececec"/><path d="M9.500 0V9.800L2 4.900Z" fill="#ececec"/></svg>
<svg style="left:388.1px;top:1173px;" width="10" height="10" viewBox="0 0 10 10"><rect x="5.400" y="0" width="2.600" height="9.800" fill="#ececec"/><path d="M0 0V9.800L6.200 4.900Z" fill="#ececec"/></svg>
<div style="left:405.3px;top:1165.3px;width:77.9px;height:24.6px;background:#80ffd4;border-radius:4px;"></div>
<div style="top:1167.85px;height:19.5px;line-height:19.5px;font-size:15px;color:#153c30;white-space:nowrap;left:405.3px;width:77.9px;text-align:center;">Tech</div>
<div style="left:484.6px;top:1165.3px;width:72.1px;height:24.6px;background:#373737;border-radius:4px;"></div>
<div style="top:1167.85px;height:19.5px;line-height:19.5px;font-size:15px;color:#dcdcdc;white-space:nowrap;left:484.6px;width:72.1px;text-align:center;">Test</div>
<div style="left:558.2px;top:1165.3px;width:109.8px;height:24.6px;background:#373737;border-radius:4px;"></div>
<div style="top:1167.85px;height:19.5px;line-height:19.5px;font-size:15px;color:#dcdcdc;white-space:nowrap;left:558.2px;width:109.8px;text-align:center;">DocOptic</div>
<div style="left:669.7px;top:1165.3px;width:77.3px;height:24.6px;background:#373737;border-radius:4px;"></div>
<div style="top:1167.85px;height:19.5px;line-height:19.5px;font-size:15px;color:#dcdcdc;white-space:nowrap;left:669.7px;width:77.3px;text-align:center;">Skull</div>
<div style="left:364.2px;top:1194.2px;width:46.5px;height:44.9px;background:#2b2b2b;"></div>
<div style="left:412px;top:1194.2px;width:83.5px;height:44.9px;background:#2b2b2b;"></div>
<div style="left:497px;top:1194.2px;width:123.7px;height:44.9px;background:#2b2b2b;"></div>
<div style="left:622.2px;top:1194.2px;width:44.7px;height:44.9px;background:#2b2b2b;"></div>
<div style="left:668.5px;top:1194.2px;width:44.5px;height:44.9px;background:#2b2b2b;"></div>
<div style="left:715px;top:1194.2px;width:44.3px;height:44.9px;background:#2b2b2b;"></div>
<div style="left:761px;top:1194.2px;width:44.7px;height:44.9px;background:#2b2b2b;"></div>
<div style="left:807.5px;top:1194.2px;width:44.3px;height:44.9px;background:#2b2b2b;"></div>
<div style="left:853.6px;top:1194.2px;width:44.5px;height:44.9px;background:#2b2b2b;"></div>
<div style="left:900px;top:1194.2px;width:64.2px;height:44.9px;background:#2b2b2b;"></div>
<div style="left:966.2px;top:1194.2px;width:93px;height:44.9px;background:#2b2b2b;"></div>
<div style="left:1061.2px;top:1194.2px;width:89.3px;height:44.9px;background:#2b2b2b;"></div>
<div style="left:1152.5px;top:1194.2px;width:44.3px;height:44.9px;background:#2b2b2b;"></div>
<div style="left:1198.6px;top:1194.2px;width:290.7px;height:44.9px;background:#2b2b2b;"></div>
<div style="left:1491px;top:1194.2px;width:150.6px;height:44.9px;background:#2b2b2b;"></div>
<div style="left:375.5px;top:1205.5px;width:23.7px;height:22.4px;background:#4a8d75;"></div>
<div style="left:375.5px;top:1217px;width:11.5px;height:10.9px;background:#80ffd4;"></div>
<div style="top:1208.23px;height:18.85px;line-height:18.85px;font-size:14.5px;color:#dcdcdc;white-space:nowrap;left:438px;letter-spacing:-0.13px;">LINK</div>
<div style="top:1208.23px;height:18.85px;line-height:18.85px;font-size:14.5px;color:#dcdcdc;white-space:nowrap;left:512px;">BPM</div>
<div style="top:1208.23px;height:18.85px;line-height:18.85px;font-size:14.5px;color:#dcdcdc;white-space:nowrap;left:553px;">120</div>
<div style="left:639.25px;top:1215.95px;width:9.5px;height:2.4px;background:#dcdcdc;"></div>
<div style="left:684.25px;top:1215.95px;width:11.5px;height:2.4px;background:#dcdcdc;"></div>
<div style="left:688.8px;top:1211.4px;width:2.4px;height:11.5px;background:#dcdcdc;"></div>
<svg style="left:730px;top:1209.1px;" width="12" height="17" viewBox="0 0 12 17"><rect x="8.100" y="0" width="2.700" height="16.300" fill="#e4e4e4"/><rect x="5" y="7.200" width="3.500" height="2" fill="#e4e4e4"/><path d="M2.300 8.200L6.300 5V11.400Z" fill="#e4e4e4"/></svg>
<svg style="left:777px;top:1209.1px;" width="12" height="17" viewBox="0 0 12 17"><rect x="1.100" y="0" width="2.700" height="16.300" fill="#e4e4e4"/><rect x="3.500" y="7.200" width="3" height="2" fill="#e4e4e4"/><path d="M9.800 8.200L5.800 5V11.400Z" fill="#e4e4e4"/></svg>
<div style="top:1208.23px;height:18.85px;line-height:18.85px;font-size:14.5px;color:#dcdcdc;white-space:nowrap;left:629.5px;width:400px;text-align:center;">/2</div>
<div style="top:1208.23px;height:18.85px;line-height:18.85px;font-size:14.5px;color:#dcdcdc;white-space:nowrap;left:675.8px;width:400px;text-align:center;">×2</div>
<div style="top:1208.23px;height:18.85px;line-height:18.85px;font-size:14.5px;color:#dcdcdc;white-space:nowrap;left:919px;letter-spacing:-0.61px;">TAP</div>
<div style="top:1208.23px;height:18.85px;line-height:18.85px;font-size:14.5px;color:#dcdcdc;white-space:nowrap;left:985.3px;letter-spacing:-1.41px;">RESYNC</div>
<div style="top:1208.23px;height:18.85px;line-height:18.85px;font-size:14.5px;color:#dcdcdc;white-space:nowrap;left:1082.5px;letter-spacing:-0.88px;">PAUSE</div>
<svg style="left:1166px;top:1207.6px;" width="18" height="20" viewBox="0 0 18 20"><path d="M5.200 0.900H10.300L12.300 9" stroke="#f0f0f0" stroke-width="1.500" fill="none" stroke-linejoin="round"/><path d="M5.200 0.900L2.500 11.500" stroke="#f0f0f0" stroke-width="1.500" fill="none"/><path d="M2.700 11H12.800L15 18.300Q15 19 14.300 19H1.200Q0.500 19 0.600 18.300Z" fill="#f4f4f4"/><path d="M10.600 11L14.800 5.500" stroke="#f0f0f0" stroke-width="1.400"/><path d="M15.200 2.700L17 4.900L15 7L13.200 4.900Z" fill="#f4f4f4"/></svg>
<div style="top:1200.4px;height:16.9px;line-height:16.9px;font-size:13px;color:#dcdcdc;white-space:nowrap;right:846.5px;text-align:right;letter-spacing:-1.11px;">FFT</div>
<div style="top:1217.9px;height:16.9px;line-height:16.9px;font-size:13px;color:#dcdcdc;white-space:nowrap;right:846.5px;text-align:right;">GAIN</div>
<svg style="left:1550.6px;top:1199.9px;" width="36" height="36" viewBox="0 0 36 36"><g transform="translate(18,18)"><path d="M-7.860 11.220A13.700 13.700 0 0 1 0 -13.700" stroke="#2b5e4e" stroke-width="5.200" fill="none"/><path d="M0 -13.700A13.700 13.700 0 0 1 7.860 11.220" stroke="#80ffd4" stroke-width="5.200" fill="none"/><circle cx="-0.700" cy="1" r="2.500" fill="#459079"/><path d="M-2.800 2.400L7.300 10.800L1.500 -0.400Z" fill="#459079"/></g></svg>
<div style="left:1598.2px;top:1204px;width:37.6px;height:25.3px;background:#503a48;"></div>
<div style="left:1645.8px;top:545.1px;width:735.1px;height:28.8px;background:#2c2c2c;border-radius:4px 4px 0 0;"></div>
<div style="top:548.72px;height:20.15px;line-height:20.15px;font-size:15.5px;color:#d0d0d0;white-space:nowrap;left:1812px;width:400px;text-align:center;">Sources</div>
<div style="left:1645.8px;top:575.5px;width:735.1px;height:42.1px;background:#2b2b2b;"></div>
<div style="left:1654.7px;top:581.8px;width:683.5px;height:27.9px;background:#141414;border-radius:4px;"></div>
<svg style="left:1662px;top:588px;" width="18" height="18" viewBox="0 0 18 18"><circle cx="6.800" cy="6.800" r="5" stroke="#dedede" stroke-width="2.400" fill="none"/><path d="M10.500 10.500L16 16" stroke="#dedede" stroke-width="3" stroke-linecap="round"/></svg>
<div style="left:2353.6px;top:595.2px;width:9.6px;height:2.2px;background:#e4e4e4;"></div>
<div style="left:2357.3px;top:591.5px;width:2.2px;height:9.6px;background:#e4e4e4;"></div>
<div style="left:1645.8px;top:617.6px;width:735.1px;height:626.4px;background:#0a0a0a;"></div>
<svg style="left:1649.05px;top:628.55px;" width="7.5" height="9.5" viewBox="0 0 7.5 9.5"><path d="M0 0L7.5 4.75L0 9.5Z" fill="#8a8a8a"/></svg>
<div style="top:623.2px;height:18.2px;line-height:18.2px;font-size:14px;color:#4b9178;white-space:nowrap;font-weight:bold;left:1667.5px;letter-spacing:-0.3px;">GENERATORS</div>
<svg style="left:1649.05px;top:658.55px;" width="7.5" height="9.5" viewBox="0 0 7.5 9.5"><path d="M0 0L7.5 4.75L0 9.5Z" fill="#8a8a8a"/></svg>
<div style="top:653.2px;height:18.2px;line-height:18.2px;font-size:14px;color:#4b9178;white-space:nowrap;font-weight:bold;left:1667.5px;letter-spacing:-0.44px;">CAPTURE DEVICES</div>
<svg style="left:1649.05px;top:688.55px;" width="7.5" height="9.5" viewBox="0 0 7.5 9.5"><path d="M0 0L7.5 4.75L0 9.5Z" fill="#8a8a8a"/></svg>
<div style="top:683.2px;height:18.2px;line-height:18.2px;font-size:14px;color:#4b9178;white-space:nowrap;font-weight:bold;left:1667.5px;letter-spacing:-0.29px;">NDI SERVERS</div>
<svg style="left:1649.05px;top:718.55px;" width="7.5" height="9.5" viewBox="0 0 7.5 9.5"><path d="M0 0L7.5 4.75L0 9.5Z" fill="#8a8a8a"/></svg>
<div style="top:713.2px;height:18.2px;line-height:18.2px;font-size:14px;color:#4b9178;white-space:nowrap;font-weight:bold;left:1667.5px;letter-spacing:0.28px;">ROUTING</div>
<svg style="left:1648.25px;top:750.3px;" width="9.5" height="7" viewBox="0 0 9.5 7"><path d="M0 0L9.5 0L4.75 7Z" fill="#8a8a8a"/></svg>
<div style="top:743.2px;height:18.2px;line-height:18.2px;font-size:14px;color:#4b9178;white-space:nowrap;font-weight:bold;left:1667.5px;letter-spacing:-0.64px;">SPOUT SERVERS</div>
<div style="top:773.58px;height:18.85px;line-height:18.85px;font-size:14.5px;color:#e0e0e0;white-space:nowrap;left:1692.3px;">Cam1</div>
<div style="top:803.58px;height:18.85px;line-height:18.85px;font-size:14.5px;color:#e0e0e0;white-space:nowrap;left:1692.3px;">Cam2</div>
<div style="top:833.58px;height:18.85px;line-height:18.85px;font-size:14.5px;color:#e0e0e0;white-space:nowrap;left:1692.3px;">Cam3</div>
<div style="top:863.58px;height:18.85px;line-height:18.85px;font-size:14.5px;color:#e0e0e0;white-space:nowrap;left:1692.3px;">TDSyphonSpoutOutCam</div>
<div style="top:893.58px;height:18.85px;line-height:18.85px;font-size:14.5px;color:#e0e0e0;white-space:nowrap;left:1692.3px;">TouchOutR</div>
<div style="left:0px;top:1248px;width:2381.3px;height:21px;background:#292929;"></div>
<div style="top:1256.62px;height:17.55px;line-height:17.55px;font-size:13.5px;color:#a4a4a4;white-space:nowrap;left:9.9px;letter-spacing:0.01px;">Resolume Arena 7.18.2</div>
<div style="top:1254.25px;height:19.5px;line-height:19.5px;font-size:15px;color:#474747;white-space:nowrap;left:1072px;">Cpu:</div>
<div style="top:1254.25px;height:19.5px;line-height:19.5px;font-size:15px;color:#0d5d0d;white-space:nowrap;left:1110.5px;">14%</div>
<div style="top:1254.25px;height:19.5px;line-height:19.5px;font-size:15px;color:#474747;white-space:nowrap;left:1148px;">Ram:</div>
<div style="top:1254.25px;height:19.5px;line-height:19.5px;font-size:15px;color:#0d5d0d;white-space:nowrap;left:1189px;">56%</div>
<div style="top:1254.25px;height:19.5px;line-height:19.5px;font-size:15px;color:#474747;white-space:nowrap;left:1226.8px;letter-spacing:-0.17px;">VRam:</div>
<div style="top:1254.25px;height:19.5px;line-height:19.5px;font-size:15px;color:#0d5d0d;white-space:nowrap;left:1277.5px;letter-spacing:-0.34px;">29%</div>
<div style="top:1254.9px;height:18.2px;line-height:18.2px;font-size:14px;color:#b4b4b4;white-space:nowrap;left:2336.7px;letter-spacing:-0.41px;">14:59</div>
<div style="left:2381.3px;top:34px;width:4.7px;height:1235px;background:#000;"></div>
<div style="left:680px;top:60px;width:273.3px;height:1.2px;background:#1b1b1b;"></div>
<div style="left:680px;top:61px;width:273.3px;height:1060.3px;background:#333333;box-shadow:0 3px 9px rgba(0,0,0,.55);"></div>
<div style="top:67.25px;height:19.5px;line-height:19.5px;font-size:15px;color:#dadada;white-space:nowrap;left:715px;letter-spacing:0.03px;">Show Ableton Link</div>
<div style="left:692px;top:71.8px;width:11.4px;height:11.4px;background:#80ffd4;border-radius:50%;"></div>
<div style="top:96.03px;height:19.5px;line-height:19.5px;font-size:15px;color:#dadada;white-space:nowrap;left:715px;letter-spacing:0.04px;">Show Audio Controls</div>
<div style="top:124.81px;height:19.5px;line-height:19.5px;font-size:15px;color:#dadada;white-space:nowrap;left:715px;letter-spacing:0.04px;">Show Layer Transport Controls</div>
<div style="top:153.59px;height:19.5px;line-height:19.5px;font-size:15px;color:#dadada;white-space:nowrap;left:715px;letter-spacing:0.03px;">Show Layer Transition Controls</div>
<div style="top:182.37px;height:19.5px;line-height:19.5px;font-size:15px;color:#dadada;white-space:nowrap;left:715px;letter-spacing:-0.12px;">Show Crossfader</div>
<div style="top:211.15px;height:19.5px;line-height:19.5px;font-size:15px;color:#dadada;white-space:nowrap;left:715px;letter-spacing:-0.13px;">Show Help</div>
<div style="top:239.93px;height:19.5px;line-height:19.5px;font-size:15px;color:#dadada;white-space:nowrap;left:715px;letter-spacing:0px;">Show Panel Monitors</div>
<div style="top:268.71px;height:19.5px;line-height:19.5px;font-size:15px;color:#dadada;white-space:nowrap;left:715px;letter-spacing:-0.05px;">Show Dashboard</div>
<div style="top:297.49px;height:19.5px;line-height:19.5px;font-size:15px;color:#dadada;white-space:nowrap;left:715px;letter-spacing:0.2px;">Show Autopilot</div>
<div style="top:326.27px;height:19.5px;line-height:19.5px;font-size:15px;color:#dadada;white-space:nowrap;left:715px;letter-spacing:-0.2px;">Show Cue Points</div>
<div style="top:355.05px;height:19.5px;line-height:19.5px;font-size:15px;color:#dadada;white-space:nowrap;left:715px;letter-spacing:-0.03px;">Show Beat Looper</div>
<div style="top:383.83px;height:19.5px;line-height:19.5px;font-size:15px;color:#dadada;white-space:nowrap;left:715px;letter-spacing:-0.52px;">Show FFT Gain</div>
<div style="left:692px;top:388.38px;width:11.4px;height:11.4px;background:#80ffd4;border-radius:50%;"></div>
<div style="top:412.61px;height:19.5px;line-height:19.5px;font-size:15px;color:#dadada;white-space:nowrap;left:715px;letter-spacing:0.14px;">Show Undo Toolbar</div>
<div style="top:441.39px;height:19.5px;line-height:19.5px;font-size:15px;color:#dadada;white-space:nowrap;left:715px;letter-spacing:-0.09px;">Show Clip Time</div>
<div style="top:470.17px;height:19.5px;line-height:19.5px;font-size:15px;color:#dadada;white-space:nowrap;left:715px;letter-spacing:-0.09px;">Show Notes</div>
<div style="top:498.95px;height:19.5px;line-height:19.5px;font-size:15px;color:#dadada;white-space:nowrap;left:715px;letter-spacing:-0.74px;">Show SMPTE</div>
<div style="top:527.73px;height:19.5px;line-height:19.5px;font-size:15px;color:#dadada;white-space:nowrap;left:715px;letter-spacing:-0.31px;">Show Denon DJ StageLinQ</div>
<div style="top:556.51px;height:19.5px;line-height:19.5px;font-size:15px;color:#dadada;white-space:nowrap;left:715px;letter-spacing:-0.37px;">Show Pioneer DJ TCNet</div>
<div style="top:585.29px;height:19.5px;line-height:19.5px;font-size:15px;color:#dadada;white-space:nowrap;left:715px;letter-spacing:-0.08px;">Show Hardware Stats</div>
<div style="left:692px;top:589.84px;width:11.4px;height:11.4px;background:#80ffd4;border-radius:50%;"></div>
<div style="left:680px;top:615.3px;width:273.3px;height:2px;background:#414141;"></div>
<div style="top:627.38px;height:18.85px;line-height:18.85px;font-size:14.5px;color:#8e8e8e;white-space:nowrap;font-weight:bold;left:714.3px;letter-spacing:0.16px;">Property Panels</div>
<div style="top:654.95px;height:19.5px;line-height:19.5px;font-size:15px;color:#dadada;white-space:nowrap;left:715px;letter-spacing:0.18px;">Show Monitor</div>
<div style="left:692px;top:659.5px;width:11.4px;height:11.4px;background:#80ffd4;border-radius:50%;"></div>
<div style="top:683.75px;height:19.5px;line-height:19.5px;font-size:15px;color:#dadada;white-space:nowrap;left:715px;letter-spacing:-0.24px;">Show Layer</div>
<div style="left:692px;top:688.3px;width:11.4px;height:11.4px;background:#80ffd4;border-radius:50%;"></div>
<div style="top:712.55px;height:19.5px;line-height:19.5px;font-size:15px;color:#dadada;white-space:nowrap;left:715px;letter-spacing:-0.28px;">Show Clip</div>
<div style="left:692px;top:717.1px;width:11.4px;height:11.4px;background:#80ffd4;border-radius:50%;"></div>
<div style="top:741.35px;height:19.5px;line-height:19.5px;font-size:15px;color:#dadada;white-space:nowrap;left:715px;letter-spacing:0.05px;">Show Composition</div>
<div style="left:692px;top:745.9px;width:11.4px;height:11.4px;background:#80ffd4;border-radius:50%;"></div>
<div style="top:770.15px;height:19.5px;line-height:19.5px;font-size:15px;color:#dadada;white-space:nowrap;left:715px;letter-spacing:-0.07px;">Show Group</div>
<div style="left:680px;top:799.7px;width:273.3px;height:2px;background:#414141;"></div>
<div style="top:812.28px;height:18.85px;line-height:18.85px;font-size:14.5px;color:#8e8e8e;white-space:nowrap;font-weight:bold;left:714.3px;letter-spacing:0.03px;">Browser Panels</div>
<div style="top:839.85px;height:19.5px;line-height:19.5px;font-size:15px;color:#dadada;white-space:nowrap;left:715px;letter-spacing:-0.39px;">Show Files</div>
<div style="top:868.63px;height:19.5px;line-height:19.5px;font-size:15px;color:#dadada;white-space:nowrap;left:715px;letter-spacing:0.02px;">Show Compositions</div>
<div style="top:897.41px;height:19.5px;line-height:19.5px;font-size:15px;color:#dadada;white-space:nowrap;left:715px;letter-spacing:-0.18px;">Show Effects</div>
<div style="left:692px;top:901.96px;width:11.4px;height:11.4px;background:#80ffd4;border-radius:50%;"></div>
<div style="top:926.19px;height:19.5px;line-height:19.5px;font-size:15px;color:#dadada;white-space:nowrap;left:715px;letter-spacing:-0.3px;">Show Sources</div>
<div style="left:692px;top:930.74px;width:11.4px;height:11.4px;background:#80ffd4;border-radius:50%;"></div>
<div style="top:954.97px;height:19.5px;line-height:19.5px;font-size:15px;color:#dadada;white-space:nowrap;left:715px;letter-spacing:-0.45px;">Show Slices</div>
<div style="left:692px;top:959.52px;width:11.4px;height:11.4px;background:#80ffd4;border-radius:50%;"></div>
<div style="top:983.75px;height:19.5px;line-height:19.5px;font-size:15px;color:#dadada;white-space:nowrap;left:715px;letter-spacing:-0.15px;">Show Render Queue</div>
<div style="top:1012.53px;height:19.5px;line-height:19.5px;font-size:15px;color:#dadada;white-space:nowrap;left:715px;letter-spacing:-0.13px;">Show Recordings</div>
<div style="left:680px;top:1042.4px;width:273.3px;height:2px;background:#414141;"></div>
<div style="top:1053.75px;height:19.5px;line-height:19.5px;font-size:15px;color:#dadada;white-space:nowrap;left:715px;letter-spacing:-0.01px;">Language</div>
<svg style="left:928.75px;top:1058.75px;" width="6.5" height="9.5" viewBox="0 0 6.5 9.5"><path d="M0 0L6.5 4.75L0 9.5Z" fill="#e6e6e6"/></svg>
<div style="left:680px;top:1083.8px;width:273.3px;height:2px;background:#414141;"></div>
<div style="top:1094.85px;height:19.5px;line-height:19.5px;font-size:15px;color:#dadada;white-space:nowrap;left:715px;letter-spacing:0.06px;">Layout</div>
<svg style="left:928.75px;top:1099.85px;" width="6.5" height="9.5" viewBox="0 0 6.5 9.5"><path d="M0 0L6.5 4.75L0 9.5Z" fill="#e6e6e6"/></svg>
<svg style="left:702px;top:47.5px;" width="14" height="21" viewBox="0 0 14 21"><path d="M1 1V17L4.800 13.500L7.600 19.800L10.200 18.700L7.500 12.500H12.500Z" fill="#fff" stroke="#000" stroke-width="1.100" stroke-linejoin="round"/></svg>
</div></body></html>
